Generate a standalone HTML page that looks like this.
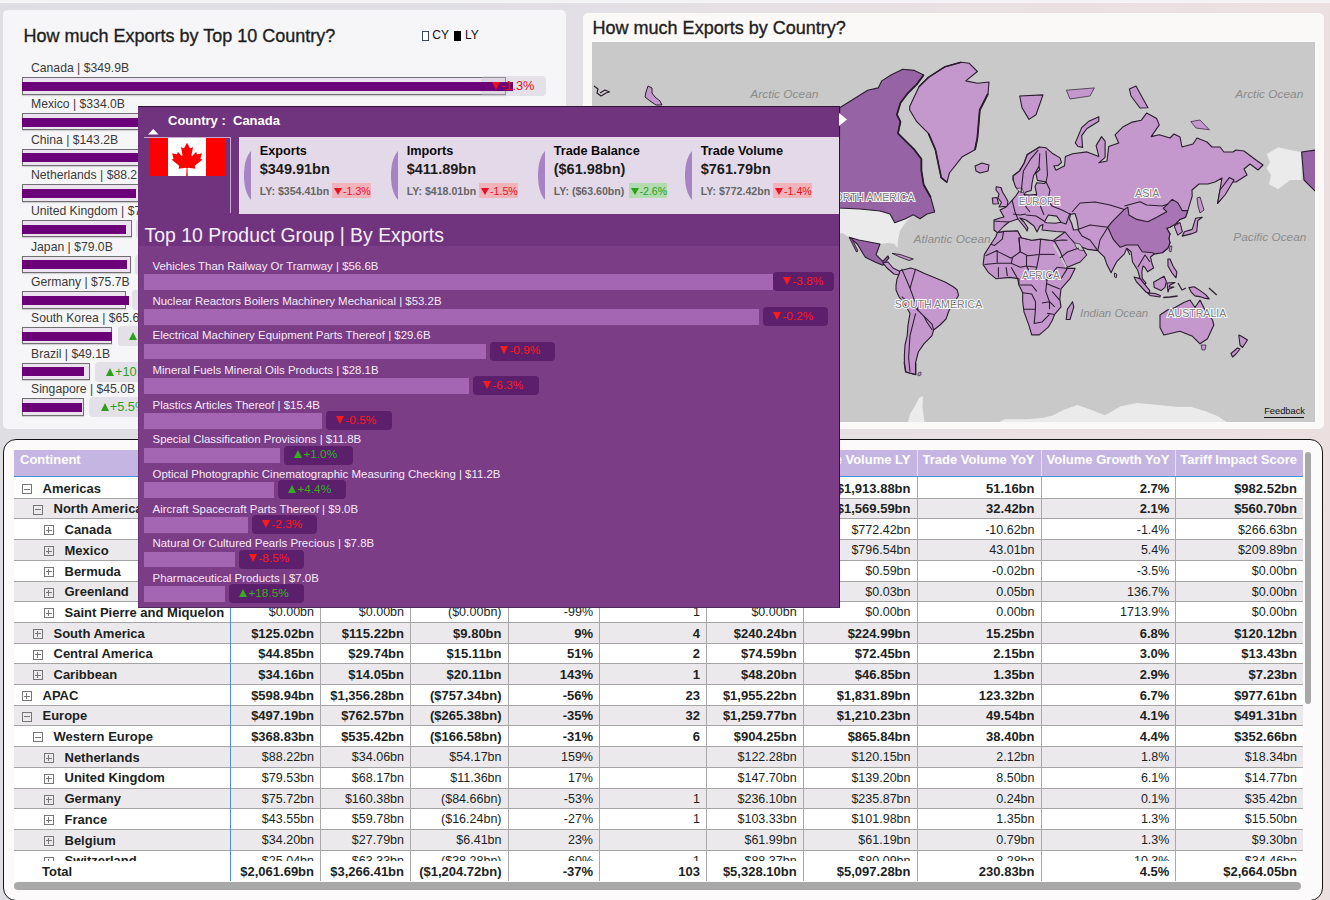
<!DOCTYPE html>
<html><head><meta charset="utf-8"><style>
html,body{margin:0;padding:0;width:1330px;height:900px;overflow:hidden;font-family:"Liberation Sans", sans-serif}
.t{position:absolute;white-space:nowrap;font-family:"Liberation Sans", sans-serif}
.r{position:absolute}
</style></head><body>
<div class="r" style="left:0;top:0;width:1330px;height:900px;background:linear-gradient(90deg,#dfdee3 0%,#e2e0e4 45%,#e9e0e2 75%,#ecdfe0 100%)"></div>
<div class="r" style="left:0.0px;top:0.0px;width:1330.0px;height:2.5px;background:#f4f3f5"></div>
<div class="r" style="left:3.0px;top:10.0px;width:563.0px;height:419.0px;background:#f6f6f8;border-radius:5px"></div>
<div class="t" style="left:23.5px;top:26.7px;font-size:18px;line-height:18px;color:#1f1e1d;-webkit-text-stroke:0.35px #1f1e1d">How much Exports by Top 10 Country?</div>
<div class="r" style="left:421.5px;top:30.5px;width:7.0px;height:10.0px;border:1px solid #3a4a5a;background:#fff;box-sizing:border-box"></div>
<div class="t" style="left:432.3px;top:28.8px;font-size:12px;line-height:12px;color:#111">CY</div>
<div class="r" style="left:453.5px;top:30.5px;width:7.5px;height:10.0px;background:#000"></div>
<div class="t" style="left:465.0px;top:28.8px;font-size:12px;line-height:12px;color:#111">LY</div>
<div class="t" style="left:31.0px;top:62.3px;font-size:12.2px;line-height:12.2px;color:#3b3a39">Canada | $349.9B</div>
<div class="r" style="left:22.0px;top:77.2px;width:483.5px;height:17.5px;background:#ede3f0;border:1px solid #707070;box-sizing:border-box;box-shadow:0 1px 1px rgba(0,0,0,.15)"></div>
<div class="r" style="left:480.5px;top:76.3px;width:65.3px;height:20.2px;background:rgba(200,194,210,.42);border-radius:4px"></div>
<div class="r" style="left:22.0px;top:82.0px;width:490.5px;height:9.0px;background:#6c0078"></div>
<div class="t" style="left:492.0px;top:80.3px;font-size:12.8px;line-height:12.8px;color:#e81123"><span style="display:inline-block;width:0;height:0;border-left:4.75px solid transparent;border-right:4.75px solid transparent;border-top:8.2px solid #e81123;vertical-align:0px;margin-right:1px"></span>-1.3%</div>
<div class="t" style="left:31.0px;top:98.0px;font-size:12.2px;line-height:12.2px;color:#3b3a39">Mexico | $334.0B</div>
<div class="r" style="left:22.0px;top:112.9px;width:458.0px;height:17.5px;background:#ede3f0;border:1px solid #707070;box-sizing:border-box;box-shadow:0 1px 1px rgba(0,0,0,.15)"></div>
<div class="r" style="left:470.0px;top:112.0px;width:70.0px;height:20.2px;background:rgba(200,194,210,.42);border-radius:4px"></div>
<div class="r" style="left:22.0px;top:117.7px;width:468.0px;height:9.0px;background:#6c0078"></div>
<div class="t" style="left:481.5px;top:116.0px;font-size:12.8px;line-height:12.8px;color:#e81123"><span style="display:inline-block;width:0;height:0;border-left:4.75px solid transparent;border-right:4.75px solid transparent;border-top:8.2px solid #e81123;vertical-align:0px;margin-right:1px"></span>-2.0%</div>
<div class="t" style="left:31.0px;top:133.7px;font-size:12.2px;line-height:12.2px;color:#3b3a39">China | $143.2B</div>
<div class="r" style="left:22.0px;top:148.5px;width:206.0px;height:17.5px;background:#ede3f0;border:1px solid #707070;box-sizing:border-box;box-shadow:0 1px 1px rgba(0,0,0,.15)"></div>
<div class="r" style="left:232.0px;top:147.6px;width:68.0px;height:20.2px;background:rgba(200,194,210,.42);border-radius:4px"></div>
<div class="r" style="left:22.0px;top:153.3px;width:200.0px;height:9.0px;background:#6c0078"></div>
<div class="t" style="left:243.5px;top:151.7px;font-size:12.8px;line-height:12.8px;color:#2ca01c"><span style="display:inline-block;width:0;height:0;border-left:4.75px solid transparent;border-right:4.75px solid transparent;border-bottom:8.2px solid #2ca01c;vertical-align:0px;margin-right:1px"></span>+2.0%</div>
<div class="t" style="left:31.0px;top:169.3px;font-size:12.2px;line-height:12.2px;color:#3b3a39">Netherlands | $88.2B</div>
<div class="r" style="left:22.0px;top:184.2px;width:128.0px;height:17.5px;background:#ede3f0;border:1px solid #707070;box-sizing:border-box;box-shadow:0 1px 1px rgba(0,0,0,.15)"></div>
<div class="r" style="left:155.0px;top:183.3px;width:65.0px;height:20.2px;background:rgba(200,194,210,.42);border-radius:4px"></div>
<div class="r" style="left:22.0px;top:189.0px;width:113.6px;height:9.0px;background:#6c0078"></div>
<div class="t" style="left:166.5px;top:187.3px;font-size:12.8px;line-height:12.8px;color:#2ca01c"><span style="display:inline-block;width:0;height:0;border-left:4.75px solid transparent;border-right:4.75px solid transparent;border-bottom:8.2px solid #2ca01c;vertical-align:0px;margin-right:1px"></span>+1.0%</div>
<div class="t" style="left:31.0px;top:205.0px;font-size:12.2px;line-height:12.2px;color:#3b3a39">United Kingdom | $79.5B</div>
<div class="r" style="left:22.0px;top:219.9px;width:109.6px;height:17.5px;background:#ede3f0;border:1px solid #707070;box-sizing:border-box;box-shadow:0 1px 1px rgba(0,0,0,.15)"></div>
<div class="r" style="left:136.0px;top:219.0px;width:69.0px;height:20.2px;background:rgba(200,194,210,.42);border-radius:4px"></div>
<div class="r" style="left:22.0px;top:224.7px;width:104.2px;height:9.0px;background:#6c0078"></div>
<div class="t" style="left:147.5px;top:223.0px;font-size:12.8px;line-height:12.8px;color:#2ca01c"><span style="display:inline-block;width:0;height:0;border-left:4.75px solid transparent;border-right:4.75px solid transparent;border-bottom:8.2px solid #2ca01c;vertical-align:0px;margin-right:1px"></span>+1.0%</div>
<div class="t" style="left:31.0px;top:240.7px;font-size:12.2px;line-height:12.2px;color:#3b3a39">Japan | $79.0B</div>
<div class="r" style="left:22.0px;top:255.6px;width:108.8px;height:17.5px;background:#ede3f0;border:1px solid #707070;box-sizing:border-box;box-shadow:0 1px 1px rgba(0,0,0,.15)"></div>
<div class="r" style="left:135.0px;top:254.7px;width:65.0px;height:20.2px;background:rgba(200,194,210,.42);border-radius:4px"></div>
<div class="r" style="left:22.0px;top:260.4px;width:105.0px;height:9.0px;background:#6c0078"></div>
<div class="t" style="left:146.5px;top:258.7px;font-size:12.8px;line-height:12.8px;color:#e81123"><span style="display:inline-block;width:0;height:0;border-left:4.75px solid transparent;border-right:4.75px solid transparent;border-top:8.2px solid #e81123;vertical-align:0px;margin-right:1px"></span>-1.0%</div>
<div class="t" style="left:31.0px;top:276.4px;font-size:12.2px;line-height:12.2px;color:#3b3a39">Germany | $75.7B</div>
<div class="r" style="left:22.0px;top:291.2px;width:103.5px;height:17.5px;background:#ede3f0;border:1px solid #707070;box-sizing:border-box;box-shadow:0 1px 1px rgba(0,0,0,.15)"></div>
<div class="r" style="left:132.0px;top:290.3px;width:68.0px;height:20.2px;background:rgba(200,194,210,.42);border-radius:4px"></div>
<div class="r" style="left:22.0px;top:296.0px;width:106.6px;height:9.0px;background:#6c0078"></div>
<div class="t" style="left:143.5px;top:294.3px;font-size:12.8px;line-height:12.8px;color:#2ca01c"><span style="display:inline-block;width:0;height:0;border-left:4.75px solid transparent;border-right:4.75px solid transparent;border-bottom:8.2px solid #2ca01c;vertical-align:0px;margin-right:1px"></span>+1.0%</div>
<div class="t" style="left:31.0px;top:312.0px;font-size:12.2px;line-height:12.2px;color:#3b3a39">South Korea | $65.6B</div>
<div class="r" style="left:22.0px;top:326.9px;width:89.6px;height:17.5px;background:#ede3f0;border:1px solid #707070;box-sizing:border-box;box-shadow:0 1px 1px rgba(0,0,0,.15)"></div>
<div class="r" style="left:117.7px;top:326.0px;width:67.3px;height:20.2px;background:rgba(200,194,210,.42);border-radius:4px"></div>
<div class="r" style="left:22.0px;top:331.7px;width:90.3px;height:9.0px;background:#6c0078"></div>
<div class="t" style="left:129.2px;top:330.0px;font-size:12.8px;line-height:12.8px;color:#2ca01c"><span style="display:inline-block;width:0;height:0;border-left:4.75px solid transparent;border-right:4.75px solid transparent;border-bottom:8.2px solid #2ca01c;vertical-align:0px;margin-right:1px"></span>+1.0%</div>
<div class="t" style="left:31.0px;top:347.7px;font-size:12.2px;line-height:12.2px;color:#3b3a39">Brazil | $49.1B</div>
<div class="r" style="left:22.0px;top:362.6px;width:67.5px;height:17.5px;background:#ede3f0;border:1px solid #707070;box-sizing:border-box;box-shadow:0 1px 1px rgba(0,0,0,.15)"></div>
<div class="r" style="left:94.5px;top:361.7px;width:75.5px;height:20.2px;background:rgba(200,194,210,.42);border-radius:4px"></div>
<div class="r" style="left:22.0px;top:367.4px;width:62.0px;height:9.0px;background:#6c0078"></div>
<div class="t" style="left:106.0px;top:365.7px;font-size:12.8px;line-height:12.8px;color:#2ca01c"><span style="display:inline-block;width:0;height:0;border-left:4.75px solid transparent;border-right:4.75px solid transparent;border-bottom:8.2px solid #2ca01c;vertical-align:0px;margin-right:1px"></span>+10.2%</div>
<div class="t" style="left:31.0px;top:383.4px;font-size:12.2px;line-height:12.2px;color:#3b3a39">Singapore | $45.0B</div>
<div class="r" style="left:22.0px;top:398.2px;width:61.7px;height:17.5px;background:#ede3f0;border:1px solid #707070;box-sizing:border-box;box-shadow:0 1px 1px rgba(0,0,0,.15)"></div>
<div class="r" style="left:89.2px;top:397.3px;width:68.8px;height:20.2px;background:rgba(200,194,210,.42);border-radius:4px"></div>
<div class="r" style="left:22.0px;top:403.0px;width:59.8px;height:9.0px;background:#6c0078"></div>
<div class="t" style="left:100.7px;top:401.4px;font-size:12.8px;line-height:12.8px;color:#2ca01c"><span style="display:inline-block;width:0;height:0;border-left:4.75px solid transparent;border-right:4.75px solid transparent;border-bottom:8.2px solid #2ca01c;vertical-align:0px;margin-right:1px"></span>+5.5%</div>
<div class="r" style="left:583.0px;top:13.0px;width:741.0px;height:416.0px;background:#fbf8f8;border-radius:5px"></div>
<div class="t" style="left:592.6px;top:18.6px;font-size:18px;line-height:18px;color:#1f1e1d;-webkit-text-stroke:0.35px #1f1e1d">How much Exports by Country?</div>
<div class="r" style="left:592.0px;top:42.0px;width:723.0px;height:379.0px;background:#c9c9c9;overflow:hidden"></div>
<svg class="r" style="left:592px;top:42px" width="723" height="380" viewBox="592 42 723 380">
<rect x="592" y="42" width="723" height="380" fill="#c9c9c9"/>
<path d="M908.0,422.0 L910.0,414.0 L915.0,406.0 L919.0,398.0 L923.0,396.0 L922.5,408.0 L924.5,422.0 Z" fill="#ebebeb" stroke="#2a1d2e" stroke-width="0" stroke-linejoin="round"/>
<path d="M999.0,422.0 L1004.5,419.3 L1026.0,419.3 L1042.4,418.0 L1053.0,415.2 L1064.0,409.8 L1077.6,405.0 L1091.0,409.8 L1104.7,415.2 L1110.0,412.5 L1121.0,406.3 L1137.0,403.0 L1158.8,405.0 L1177.8,407.0 L1191.3,407.0 L1205.0,411.0 L1218.4,416.5 L1226.5,422.0 Z" fill="#ebebeb" stroke="#2a1d2e" stroke-width="0" stroke-linejoin="round"/>
<path d="M839.0,208.0 L860.0,209.0 L880.0,211.0 L890.0,214.0 L894.7,222.7 L905.0,219.0 L913.3,214.7 L906.0,222.0 L900.0,230.7 L898.0,240.0 L897.3,248.0 L894.7,244.0 L888.0,243.0 L880.0,244.0 L873.3,242.7 L858.7,240.0 L849.3,237.3 L842.7,233.3 L839.0,233.3 Z" fill="#ebebeb" stroke="#2a1d2e" stroke-width="0" stroke-linejoin="round"/>
<path d="M594.0,86.0 L598.0,89.0 L597.0,93.0 L601.0,96.0 L606.0,93.0 L609.5,92.0 L605.0,90.0 L600.0,93.0" fill="none" stroke="#2a1d2e" stroke-width="1.2" stroke-linejoin="round"/>
<path d="M648.0,86.0 L652.0,88.0 L652.0,93.0 L655.0,97.0 L660.0,101.0 L662.0,105.0 L656.0,105.0 L650.0,101.0 L645.0,97.0 L646.0,92.0 Z" fill="#c497cd" stroke="#2a1d2e" stroke-width="1.0" stroke-linejoin="round"/>
<path d="M839.7,107.7 L867.7,90.2 L878.2,87.9 L881.7,80.9 L891.0,75.0 L902.7,69.2 L914.4,70.4 L923.7,75.0 L916.7,84.4 L907.4,93.7 L900.4,103.0 L896.9,114.7 L900.4,121.7 L898.0,133.4 L905.0,140.4 L914.4,149.7 L921.4,159.0 L921.4,170.7 L923.7,184.8 L930.7,197.3 L934.7,212.0 L927.0,214.0 L920.0,218.7 L913.3,214.7 L905.0,219.0 L894.7,222.7 L890.0,214.0 L880.0,211.0 L860.0,209.0 L839.0,208.0 Z" fill="#9663a5" stroke="#2a1d2e" stroke-width="1.1" stroke-linejoin="round"/>
<path d="M1266.6,154.3 L1278.3,147.3 L1290.0,150.0 L1301.6,152.0 L1301.6,180.0 L1290.0,180.0 L1278.3,189.3 L1269.0,184.6 L1271.0,175.0 L1266.6,168.3 L1270.0,162.0 Z" fill="#ebebeb" stroke="#2a1d2e" stroke-width="0" stroke-linejoin="round"/>
<path d="M1301.6,152.0 L1316.0,150.0 L1316.0,192.0 L1304.0,180.0 Z" fill="#9663a5" stroke="#2a1d2e" stroke-width="1.1" stroke-linejoin="round"/>
<path d="M909.7,106.5 L919.0,86.7 L928.4,77.4 L944.7,66.9 L961.0,62.2 L969.3,63.3 L977.4,71.5 L965.8,80.9 L977.4,83.2 L989.0,82.0 L988.0,93.7 L979.8,110.0 L977.4,138.0 L975.0,149.7 L962.3,156.7 L949.4,173.0 L947.0,182.4 L941.2,177.7 L935.4,149.7 L928.4,133.4 L916.7,121.7 L909.7,110.0 Z" fill="#c497cd" stroke="#2a1d2e" stroke-width="1.1" stroke-linejoin="round"/>
<path d="M923.7,75.0 L916.7,84.4 L907.4,93.7 L900.4,103.0 L896.9,114.7 L900.4,121.7 L898.0,133.4 L905.0,140.4 L914.4,149.7 L921.4,159.0 L921.4,170.7 L923.7,184.8 L930.7,197.3" fill="none" stroke="#2a1d2e" stroke-width="1.8" stroke-linejoin="round"/>
<path d="M988.0,93.7 L979.8,110.0 L977.4,138.0 L975.0,149.7" fill="none" stroke="#2a1d2e" stroke-width="1.9" stroke-linejoin="round"/>
<path d="M928.4,133.4 L935.4,149.7 L941.2,177.7 L947.0,182.4" fill="none" stroke="#2a1d2e" stroke-width="1.7" stroke-linejoin="round"/>
<path d="M919.0,86.7 L928.4,77.4 L944.7,66.9 L961.0,62.2" fill="none" stroke="#2a1d2e" stroke-width="1.5" stroke-linejoin="round"/>
<path d="M1013.3,180.4 L1013.3,175.8 L1019.5,171.1 L1024.2,163.3 L1027.3,154.8 L1033.5,150.9 L1039.8,147.0" fill="none" stroke="#2a1d2e" stroke-width="1.6" stroke-linejoin="round"/>
<path d="M915.5,363.0 L915.5,374.4 L910.0,373.0 L905.8,371.7 L904.4,362.0" fill="none" stroke="#2a1d2e" stroke-width="1.8" stroke-linejoin="round"/>
<path d="M975.0,166.0 L982.0,163.0 L989.0,165.0 L988.0,171.0 L980.0,173.0 L976.0,171.0 Z" fill="#c497cd" stroke="#2a1d2e" stroke-width="1.1" stroke-linejoin="round"/>
<path d="M849.3,237.3 L858.7,240.0 L873.3,242.7 L880.0,244.0 L876.0,254.7 L882.7,261.3 L888.0,256.0 L889.0,258.0 L882.7,265.3 L875.0,262.0 L865.3,257.3 L857.3,244.0 Z" fill="#9663a5" stroke="#2a1d2e" stroke-width="1.1" stroke-linejoin="round"/>
<path d="M849.5,238.0 L852.0,239.0 L858.0,251.0 L856.5,252.0 Z" fill="#9663a5" stroke="#2a1d2e" stroke-width="0.9" stroke-linejoin="round"/>
<path d="M882.7,262.7 L888.0,262.0 L893.0,268.0 L900.0,271.5 L899.0,275.0 L894.0,274.0 L887.0,268.0 Z" fill="#c497cd" stroke="#2a1d2e" stroke-width="1.1" stroke-linejoin="round"/>
<path d="M892.0,253.3 L900.0,254.5 L913.3,259.0 L909.0,260.5 L900.0,257.0 Z" fill="#c497cd" stroke="#2a1d2e" stroke-width="0.9" stroke-linejoin="round"/>
<path d="M899.0,274.4 L900.0,270.7 L910.7,268.0 L917.0,270.0 L924.0,273.3 L937.3,278.7 L945.0,282.0 L953.3,286.7 L957.0,289.7 L958.6,295.3 L954.0,303.0 L949.0,310.5 L946.0,319.0 L940.0,325.0 L933.6,330.0 L932.0,335.6 L923.9,343.9 L918.3,352.0 L915.5,363.0 L915.5,374.4 L910.0,373.0 L905.8,371.7 L904.4,362.0 L904.4,355.0 L905.0,345.0 L907.2,335.6 L908.0,325.0 L910.0,313.3 L905.0,305.0 L899.0,296.7 L896.0,290.0 L896.0,285.6 L897.0,279.0 Z" fill="#c497cd" stroke="#2a1d2e" stroke-width="1.1" stroke-linejoin="round"/>
<path d="M918.0,373.0 L921.0,372.0 L921.0,375.0 L918.0,376.0 Z" fill="#c497cd" stroke="#2a1d2e" stroke-width="0.6" stroke-linejoin="round"/>
<path d="M1015.7,187.4 L1013.3,180.4 L1013.3,175.8 L1019.5,171.1 L1024.2,163.3 L1027.3,154.8 L1033.5,150.9 L1039.8,147.0 L1046.0,147.8 L1052.2,153.2 L1060.0,157.9 L1061.5,162.6 L1057.7,165.7 L1053.8,165.7 L1056.0,170.3 L1064.6,165.7 L1065.4,156.4 L1072.6,153.7 L1087.0,151.9 L1098.8,156.4 L1096.1,145.6 L1101.5,136.6 L1105.1,141.1 L1105.1,157.3 L1098.8,162.8 L1107.0,161.0 L1108.7,146.5 L1118.7,142.9 L1115.0,134.8 L1123.2,126.7 L1132.2,122.1 L1141.2,120.3 L1146.6,113.1 L1150.3,114.9 L1156.6,118.5 L1159.3,124.9 L1151.2,136.6 L1159.3,134.8 L1170.0,138.0 L1174.0,134.0 L1180.0,137.0 L1182.0,147.0 L1193.0,144.0 L1197.0,138.0 L1207.0,142.0 L1212.0,147.0 L1220.0,147.0 L1224.0,152.0 L1233.0,152.0 L1236.0,150.0 L1244.0,151.0 L1256.0,160.0 L1263.0,165.0 L1258.0,170.0 L1250.0,164.0 L1244.0,169.0 L1247.0,175.0 L1236.0,182.0 L1227.0,182.0 L1224.0,195.0 L1217.6,203.3 L1222.0,178.0 L1215.0,182.0 L1208.0,184.0 L1199.0,184.0 L1192.0,190.0 L1192.2,196.1 L1187.8,210.6 L1185.6,217.2 L1180.0,219.4 L1175.6,223.9 L1174.4,226.1 L1177.8,235.0 L1182.2,231.7 L1180.0,222.8 L1175.6,223.9 L1170.0,227.2 L1166.7,228.3 L1170.0,233.9 L1168.9,238.3 L1170.0,242.8 L1167.8,248.3 L1162.2,252.8 L1158.8,250.5 L1153.6,254.5 L1150.5,257.0 L1152.0,263.5 L1153.6,268.0 L1147.6,271.8 L1145.0,267.5 L1143.0,266.0 L1141.8,272.0 L1142.3,278.6 L1146.0,283.0 L1144.5,284.6 L1140.0,278.6 L1137.8,270.3 L1132.5,262.0 L1131.1,251.7 L1126.7,248.3 L1124.4,253.9 L1116.7,261.7 L1114.4,266.1 L1111.1,272.8 L1106.7,263.9 L1104.4,257.2 L1100.0,252.8 L1097.8,250.6 L1087.8,249.4 L1082.0,247.0 L1086.7,255.0 L1080.2,262.0 L1067.4,267.2 L1059.8,258.2 L1053.4,244.2 L1052.0,241.6 L1040.0,241.0 L1020.0,236.0 L998.0,233.0 L994.0,230.0 L994.0,220.0 L1000.0,218.0 L1004.0,217.0 L1000.0,210.0 L1006.0,207.0 L1011.8,200.7 L1015.7,196.0 L1019.5,190.5 L1018.0,189.0 Z" fill="#c497cd" stroke="#2a1d2e" stroke-width="1.1" stroke-linejoin="round"/>
<path d="M997.2,232.7 L1003.6,231.4 L1017.6,230.7 L1021.4,237.8 L1031.7,240.3 L1040.6,239.1 L1050.8,240.3 L1054.7,241.6 L1059.8,250.6 L1064.9,263.3 L1067.4,268.4 L1075.1,268.4 L1070.0,278.7 L1061.0,288.9 L1059.8,299.1 L1061.0,306.8 L1054.7,314.4 L1052.1,320.8 L1048.3,327.2 L1039.3,334.9 L1031.7,334.9 L1029.1,325.9 L1024.0,311.9 L1022.7,301.7 L1022.7,292.7 L1018.9,285.0 L1018.9,278.7 L1009.9,277.4 L995.9,278.7 L988.2,272.3 L983.1,264.6 L984.4,254.4 L990.8,244.2 L995.9,236.5 Z" fill="#c497cd" stroke="#2a1d2e" stroke-width="1.1" stroke-linejoin="round"/>
<path d="M1067.4,309.3 L1072.5,301.7 L1073.8,306.8 L1070.0,319.5 L1066.2,319.5 Z" fill="#c497cd" stroke="#2a1d2e" stroke-width="1.1" stroke-linejoin="round"/>
<path d="M998.0,232.5 L1004.0,226.0 L1009.0,222.0 L1018.0,219.0 L1022.0,224.0 L1026.0,229.0 L1027.0,231.0 L1028.0,228.0 L1024.0,222.0 L1020.0,218.0 L1026.0,220.0 L1034.0,226.0 L1037.0,232.0 L1040.0,226.0 L1043.0,224.5 L1042.0,230.0 L1056.0,231.5 L1065.0,232.0 L1054.0,240.0 L1052.0,240.5 L1040.6,239.1 L1031.7,240.3 L1021.4,237.8 L1017.6,230.7 L1003.6,231.4 Z" fill="#c9c9c9" stroke="#2a1d2e" stroke-width="1.1" stroke-linejoin="round"/>
<path d="M1044.4,221.7 L1048.3,215.0 L1056.7,216.1 L1061.1,222.2 L1055.0,223.3 L1046.7,222.8 Z" fill="#c9c9c9" stroke="#2a1d2e" stroke-width="1.1" stroke-linejoin="round"/>
<path d="M1070.5,214.4 L1075.0,213.5 L1077.0,220.0 L1078.5,229.5 L1073.5,230.0 L1071.5,223.0 L1069.5,219.0 Z" fill="#c9c9c9" stroke="#2a1d2e" stroke-width="1.1" stroke-linejoin="round"/>
<path d="M1114.4,273.0 L1116.7,274.0 L1116.5,277.5 L1114.5,277.0 Z" fill="#c497cd" stroke="#2a1d2e" stroke-width="0.9" stroke-linejoin="round"/>
<path d="M1039.0,166.4 L1039.8,169.5 L1035.9,173.4 L1037.4,180.4 L1046.0,182.0 L1044.4,183.5 L1036.7,182.8 L1035.0,186.7 L1036.7,194.4 L1030.0,195.0 L1024.0,194.5 L1026.0,192.0 L1031.2,190.5 L1032.0,183.5 L1033.5,175.8 Z" fill="#c9c9c9" stroke="#2a1d2e" stroke-width="1.1" stroke-linejoin="round"/>
<path d="M1016.0,188.5 L1022.0,188.0 L1024.0,193.0 L1019.5,191.5 Z" fill="#c9c9c9" stroke="#2a1d2e" stroke-width="0.6" stroke-linejoin="round"/>
<path d="M1053.4,244.2 L1058.0,252.0 L1062.0,259.0 L1066.2,267.2" fill="none" stroke="#c9c9c9" stroke-width="1.8" stroke-linejoin="round"/>
<path d="M1074.4,242.8 L1080.0,244.0 L1084.0,250.6 L1079.0,250.0 L1076.0,247.0 Z" fill="#c9c9c9" stroke="#2a1d2e" stroke-width="0.7" stroke-linejoin="round"/>
<path d="M996.2,186.7 L1001.0,187.5 L1002.5,192.0 L1005.0,196.0 L1008.0,201.5 L1007.0,206.2 L999.0,207.0 L1001.5,202.5 L998.0,198.0 L999.0,194.0 L996.0,190.0 Z" fill="#c497cd" stroke="#2a1d2e" stroke-width="1.1" stroke-linejoin="round"/>
<path d="M992.3,198.0 L997.0,197.5 L998.6,203.8 L993.0,204.0 Z" fill="#c497cd" stroke="#2a1d2e" stroke-width="1.1" stroke-linejoin="round"/>
<path d="M1019.7,96.0 L1043.0,94.9 L1036.0,114.7 L1029.0,119.4 L1022.0,107.7 Z" fill="#c497cd" stroke="#2a1d2e" stroke-width="1.1" stroke-linejoin="round"/>
<path d="M1066.4,90.2 L1094.4,87.9 L1090.0,96.0 L1070.0,99.0 Z" fill="#c497cd" stroke="#2a1d2e" stroke-width="0.7" stroke-linejoin="round"/>
<path d="M1075.3,142.9 L1081.7,127.6 L1088.9,121.2 L1098.8,116.7 L1098.8,121.2 L1087.0,128.5 L1081.7,135.7 L1082.6,147.4 L1078.0,146.5 Z" fill="#c497cd" stroke="#2a1d2e" stroke-width="1.1" stroke-linejoin="round"/>
<path d="M1129.4,89.0 L1136.0,86.0 L1142.0,97.0 L1148.0,107.7 L1140.0,108.0 L1131.0,96.0 Z" fill="#c497cd" stroke="#2a1d2e" stroke-width="1.1" stroke-linejoin="round"/>
<path d="M1190.8,121.6 L1200.0,120.0 L1209.4,129.8 L1196.0,128.0 Z" fill="#c497cd" stroke="#2a1d2e" stroke-width="0.7" stroke-linejoin="round"/>
<path d="M1229.3,177.6 L1234.0,180.0 L1225.0,195.0 L1217.6,203.3 L1220.0,190.0 Z" fill="#c497cd" stroke="#2a1d2e" stroke-width="1.1" stroke-linejoin="round"/>
<path d="M1202.2,217.2 L1197.8,220.6 L1196.7,231.7 L1191.1,233.9 L1182.2,236.1 L1184.4,231.7 L1192.2,229.4 L1195.6,218.3 Z" fill="#c497cd" stroke="#2a1d2e" stroke-width="1.1" stroke-linejoin="round"/>
<path d="M1197.0,198.0 L1200.0,197.0 L1204.0,210.0 L1200.0,213.0 L1198.0,206.0 Z" fill="#c497cd" stroke="#2a1d2e" stroke-width="0.8" stroke-linejoin="round"/>
<path d="M1170.0,246.0 L1172.0,246.0 L1171.0,252.0 L1169.0,251.0 Z" fill="#c497cd" stroke="#2a1d2e" stroke-width="0.7" stroke-linejoin="round"/>
<path d="M1134.0,277.0 L1140.0,278.6 L1149.8,290.6 L1149.0,293.6 L1146.0,292.0 L1136.3,281.6 Z" fill="#c497cd" stroke="#2a1d2e" stroke-width="1.1" stroke-linejoin="round"/>
<path d="M1147.6,292.9 L1155.0,293.5 L1160.3,295.5 L1160.0,297.0 L1150.0,295.5 Z" fill="#c497cd" stroke="#2a1d2e" stroke-width="1.1" stroke-linejoin="round"/>
<path d="M1163.3,297.5 L1170.0,297.0 L1177.6,296.0" fill="none" stroke="#2a1d2e" stroke-width="1.5" stroke-linejoin="round"/>
<path d="M1153.6,282.3 L1158.8,279.3 L1164.0,276.3 L1166.4,281.6 L1164.8,287.6 L1161.0,290.6 L1154.3,287.6 Z" fill="#c497cd" stroke="#2a1d2e" stroke-width="1.1" stroke-linejoin="round"/>
<path d="M1167.0,283.0 L1175.0,282.5 L1170.0,285.0 L1169.0,287.0 L1174.0,287.0 L1169.0,289.0 L1168.0,292.0 Z" fill="#c497cd" stroke="#2a1d2e" stroke-width="1.1" stroke-linejoin="round"/>
<path d="M1167.9,259.0 L1170.0,259.0 L1173.0,266.0 L1176.9,272.0 L1176.0,277.8 L1172.0,273.0 L1168.0,266.0 Z" fill="#c497cd" stroke="#2a1d2e" stroke-width="1.1" stroke-linejoin="round"/>
<path d="M1188.9,287.6 L1194.2,286.8 L1200.2,290.6 L1206.2,295.1 L1209.2,298.9 L1204.0,298.1 L1199.4,296.6 L1194.9,295.9 L1191.2,292.1 Z" fill="#c497cd" stroke="#2a1d2e" stroke-width="1.1" stroke-linejoin="round"/>
<path d="M1209.0,288.0 L1216.7,295.0" fill="none" stroke="#2a1d2e" stroke-width="1.2" stroke-linejoin="round"/>
<path d="M1178.0,283.0 L1182.0,290.0 L1186.0,288.0" fill="none" stroke="#2a1d2e" stroke-width="1.2" stroke-linejoin="round"/>
<path d="M1160.0,315.0 L1167.5,310.0 L1175.0,307.5 L1183.8,302.5 L1190.0,300.0 L1195.0,307.5 L1200.0,300.0 L1205.0,310.0 L1212.5,320.0 L1213.8,325.0 L1207.5,338.8 L1200.0,343.8 L1192.5,336.3 L1180.0,331.3 L1163.8,335.0 L1160.0,327.5 Z" fill="#c497cd" stroke="#2a1d2e" stroke-width="1.1" stroke-linejoin="round"/>
<path d="M1201.0,345.0 L1206.0,345.0 L1205.0,350.0 L1202.0,350.0 Z" fill="#c497cd" stroke="#2a1d2e" stroke-width="0.7" stroke-linejoin="round"/>
<path d="M1238.8,335.0 L1241.0,336.0 L1247.5,340.0 L1242.5,347.5 L1240.0,345.0 Z" fill="#c497cd" stroke="#2a1d2e" stroke-width="1.1" stroke-linejoin="round"/>
<path d="M1240.0,349.0 L1236.0,354.0 L1232.5,357.0 L1231.0,353.5 L1237.5,348.0 Z" fill="#c497cd" stroke="#2a1d2e" stroke-width="1.1" stroke-linejoin="round"/>
<path d="M1107.8,227.2 L1112.2,221.7 L1124.4,209.4 L1127.8,207.2 L1128.9,215.0 L1136.7,219.4 L1147.8,221.7 L1156.7,217.2 L1166.7,211.7 L1163.3,208.3 L1167.8,203.9 L1172.2,199.4 L1177.8,202.8 L1182.2,210.6 L1187.8,210.6 L1185.6,217.2 L1180.0,219.4 L1175.6,223.9 L1170.0,227.2 L1166.7,228.3 L1170.0,233.9 L1168.9,238.3 L1170.0,242.8 L1167.8,248.3 L1162.2,252.8 L1155.6,253.9 L1152.2,252.8 L1142.2,251.7 L1137.8,245.0 L1126.7,245.0 L1120.0,247.2 L1113.3,239.4 Z" fill="#a874b3" stroke="#2a1d2e" stroke-width="1.1" stroke-linejoin="round"/>
<path d="M1174.4,226.1 L1180.0,222.8 L1182.2,231.7 L1177.8,235.0 L1175.6,229.4 Z" fill="#c497cd" stroke="#2a1d2e" stroke-width="0.8" stroke-linejoin="round"/>
<path d="M1003.6,231.4 L1002.3,239.1 L994.6,245.4 L990.8,244.2" fill="none" stroke="#2a1d2e" stroke-width="1.05" stroke-linejoin="round"/>
<path d="M995.9,250.6 L1011.2,258.2 L1020.2,251.8 L1018.9,237.8 L1021.4,237.8" fill="none" stroke="#2a1d2e" stroke-width="1.05" stroke-linejoin="round"/>
<path d="M1018.9,237.8 L1020.2,251.8 L1027.8,255.7 L1039.3,254.4 L1040.6,239.1" fill="none" stroke="#2a1d2e" stroke-width="1.05" stroke-linejoin="round"/>
<path d="M1039.3,254.4 L1054.7,254.4" fill="none" stroke="#2a1d2e" stroke-width="1.05" stroke-linejoin="round"/>
<path d="M1026.5,255.7 L1026.5,265.9 L1036.8,267.2 L1039.3,254.4" fill="none" stroke="#2a1d2e" stroke-width="1.05" stroke-linejoin="round"/>
<path d="M1036.8,267.2 L1034.2,276.1 L1047.0,279.9 L1057.2,267.2" fill="none" stroke="#2a1d2e" stroke-width="1.05" stroke-linejoin="round"/>
<path d="M985.7,255.7 L997.2,250.6 L997.2,263.3 L984.4,264.6" fill="none" stroke="#2a1d2e" stroke-width="1.05" stroke-linejoin="round"/>
<path d="M997.2,263.3 L1011.2,263.3 L1012.5,258.2" fill="none" stroke="#2a1d2e" stroke-width="1.05" stroke-linejoin="round"/>
<path d="M1011.2,263.3 L1020.2,267.2 L1026.5,265.9" fill="none" stroke="#2a1d2e" stroke-width="1.05" stroke-linejoin="round"/>
<path d="M998.4,267.2 L998.4,277.4" fill="none" stroke="#2a1d2e" stroke-width="1.05" stroke-linejoin="round"/>
<path d="M1006.1,267.2 L1007.4,276.1" fill="none" stroke="#2a1d2e" stroke-width="1.05" stroke-linejoin="round"/>
<path d="M1011.2,267.2 L1017.6,278.7 L1018.9,285.0" fill="none" stroke="#2a1d2e" stroke-width="1.05" stroke-linejoin="round"/>
<path d="M1026.5,265.9 L1031.7,276.1 L1021.4,278.7" fill="none" stroke="#2a1d2e" stroke-width="1.05" stroke-linejoin="round"/>
<path d="M1047.0,279.9 L1045.7,291.4 L1049.5,301.7 L1049.5,309.3" fill="none" stroke="#2a1d2e" stroke-width="1.05" stroke-linejoin="round"/>
<path d="M1022.7,292.7 L1031.7,294.0 L1035.5,301.7 L1035.5,309.3 L1024.0,309.3" fill="none" stroke="#2a1d2e" stroke-width="1.05" stroke-linejoin="round"/>
<path d="M1035.5,309.3 L1034.2,323.4 L1041.9,322.1 L1049.5,314.4" fill="none" stroke="#2a1d2e" stroke-width="1.05" stroke-linejoin="round"/>
<path d="M1047.0,283.8 L1059.8,288.9" fill="none" stroke="#2a1d2e" stroke-width="1.05" stroke-linejoin="round"/>
<path d="M1052.1,291.4 L1059.8,300.4" fill="none" stroke="#2a1d2e" stroke-width="1.05" stroke-linejoin="round"/>
<path d="M1041.9,302.9 L1049.5,301.7 L1054.7,306.8" fill="none" stroke="#2a1d2e" stroke-width="1.05" stroke-linejoin="round"/>
<path d="M1057.2,267.2 L1067.4,268.4 L1061.0,278.7" fill="none" stroke="#2a1d2e" stroke-width="1.05" stroke-linejoin="round"/>
<path d="M1020.2,285.0 L1031.7,285.0 L1036.8,291.4" fill="none" stroke="#2a1d2e" stroke-width="1.05" stroke-linejoin="round"/>
<path d="M1054.7,314.4 L1047.0,313.2" fill="none" stroke="#2a1d2e" stroke-width="1.05" stroke-linejoin="round"/>
<path d="M1021.0,193.0 L1023.4,171.1 L1030.4,159.4 L1038.2,150.1" fill="none" stroke="#2a1d2e" stroke-width="1.05" stroke-linejoin="round"/>
<path d="M1039.0,166.4 L1039.8,153.2" fill="none" stroke="#2a1d2e" stroke-width="1.05" stroke-linejoin="round"/>
<path d="M1046.0,150.9 L1047.5,175.0 L1046.0,182.0" fill="none" stroke="#2a1d2e" stroke-width="1.05" stroke-linejoin="round"/>
<path d="M1046.0,182.0 L1050.0,190.0 L1048.0,200.0 L1052.0,206.0 L1062.0,210.0 L1070.5,214.4" fill="none" stroke="#2a1d2e" stroke-width="1.05" stroke-linejoin="round"/>
<path d="M1072.0,212.0 L1080.0,203.0 L1095.0,202.0 L1110.0,205.0 L1124.4,209.4" fill="none" stroke="#2a1d2e" stroke-width="1.05" stroke-linejoin="round"/>
<path d="M1124.4,206.1 L1140.0,201.7 L1146.7,205.0 L1162.2,206.1 L1167.8,203.9" fill="none" stroke="#2a1d2e" stroke-width="1.05" stroke-linejoin="round"/>
<path d="M1077.8,229.4 L1090.0,225.0 L1107.8,227.2" fill="none" stroke="#2a1d2e" stroke-width="1.05" stroke-linejoin="round"/>
<path d="M1065.0,232.0 L1070.0,238.0 L1074.4,242.8" fill="none" stroke="#2a1d2e" stroke-width="1.05" stroke-linejoin="round"/>
<path d="M1077.8,229.4 L1082.0,236.0 L1090.0,240.0 L1097.8,250.6" fill="none" stroke="#2a1d2e" stroke-width="1.05" stroke-linejoin="round"/>
<path d="M1097.8,250.6 L1100.0,240.0 L1107.8,227.2" fill="none" stroke="#2a1d2e" stroke-width="1.05" stroke-linejoin="round"/>
<path d="M1059.8,258.2 L1067.4,252.0 L1078.9,248.0" fill="none" stroke="#2a1d2e" stroke-width="1.05" stroke-linejoin="round"/>
<path d="M1137.8,267.2 L1145.0,255.0 L1150.0,262.0" fill="none" stroke="#2a1d2e" stroke-width="1.05" stroke-linejoin="round"/>
<path d="M1126.7,248.3 L1130.0,255.0" fill="none" stroke="#2a1d2e" stroke-width="1.05" stroke-linejoin="round"/>
<path d="M994.0,221.0 L1000.0,221.5 L1009.0,222.0" fill="none" stroke="#2a1d2e" stroke-width="1.05" stroke-linejoin="round"/>
<path d="M1012.0,200.0 L1015.0,212.0 L1018.0,219.0" fill="none" stroke="#2a1d2e" stroke-width="1.05" stroke-linejoin="round"/>
<path d="M1025.0,195.0 L1026.0,207.0 L1030.0,212.0" fill="none" stroke="#2a1d2e" stroke-width="1.05" stroke-linejoin="round"/>
<path d="M1013.0,214.0 L1020.0,215.0 L1026.0,214.0" fill="none" stroke="#2a1d2e" stroke-width="1.05" stroke-linejoin="round"/>
<path d="M1036.0,195.0 L1040.0,205.0 L1044.0,215.0" fill="none" stroke="#2a1d2e" stroke-width="1.05" stroke-linejoin="round"/>
<path d="M1026.0,215.0 L1036.0,216.0 L1044.0,221.0" fill="none" stroke="#2a1d2e" stroke-width="1.05" stroke-linejoin="round"/>
<path d="M1060.0,222.0 L1066.0,224.0 L1070.0,213.0" fill="none" stroke="#2a1d2e" stroke-width="1.05" stroke-linejoin="round"/>
<path d="M1054.0,241.0 L1062.0,240.0 L1067.4,240.3" fill="none" stroke="#2a1d2e" stroke-width="1.05" stroke-linejoin="round"/>
<path d="M901.7,268.9 L910.0,288.3 L918.3,310.6 L932.2,324.4 L933.6,330.0" fill="none" stroke="#2a1d2e" stroke-width="1.05" stroke-linejoin="round"/>
<path d="M915.6,268.9 L910.0,288.3" fill="none" stroke="#2a1d2e" stroke-width="1.05" stroke-linejoin="round"/>
<path d="M901.7,296.7 L918.3,310.6" fill="none" stroke="#2a1d2e" stroke-width="1.05" stroke-linejoin="round"/>
<path d="M915.6,313.3 L910.0,335.6 L908.6,357.8 L910.0,371.7" fill="none" stroke="#2a1d2e" stroke-width="1.05" stroke-linejoin="round"/>
<path d="M923.9,316.1 L926.7,321.7 L932.2,330.0" fill="none" stroke="#2a1d2e" stroke-width="1.05" stroke-linejoin="round"/>
<text x="827" y="201" font-family="Liberation Sans" font-size="11" fill="#7c7c7c" stroke="#fbfbfb" stroke-width="2" paint-order="stroke" textLength="87.39999999999998" lengthAdjust="spacingAndGlyphs">NORTH AMERICA</text>
<text x="894.7" y="307.8" font-family="Liberation Sans" font-size="11" fill="#7c7c7c" stroke="#fbfbfb" stroke-width="2" paint-order="stroke" textLength="87.5" lengthAdjust="spacingAndGlyphs">SOUTH AMERICA</text>
<text x="1018.8" y="204.5" font-family="Liberation Sans" font-size="11" fill="#7c7c7c" stroke="#fbfbfb" stroke-width="2" paint-order="stroke" textLength="41.200000000000045" lengthAdjust="spacingAndGlyphs">EUROPE</text>
<text x="1135" y="196.7" font-family="Liberation Sans" font-size="11" fill="#7c7c7c" stroke="#fbfbfb" stroke-width="2" paint-order="stroke" textLength="24.40000000000009" lengthAdjust="spacingAndGlyphs">ASIA</text>
<text x="1022" y="278.7" font-family="Liberation Sans" font-size="11" fill="#7c7c7c" stroke="#fbfbfb" stroke-width="2" paint-order="stroke" textLength="37.799999999999955" lengthAdjust="spacingAndGlyphs">AFRICA</text>
<text x="1167.5" y="317" font-family="Liberation Sans" font-size="11" fill="#7c7c7c" stroke="#fbfbfb" stroke-width="2" paint-order="stroke" textLength="58.799999999999955" lengthAdjust="spacingAndGlyphs">AUSTRALIA</text>
<text x="750.3" y="98.3" font-family="Liberation Sans" font-size="11" font-style="italic" fill="#8c8c8c" textLength="68.10000000000002" lengthAdjust="spacingAndGlyphs">Arctic Ocean</text>
<text x="1235.3" y="97.8" font-family="Liberation Sans" font-size="11" font-style="italic" fill="#8c8c8c" textLength="68.0" lengthAdjust="spacingAndGlyphs">Arctic Ocean</text>
<text x="913.6" y="243.3" font-family="Liberation Sans" font-size="11" font-style="italic" fill="#8c8c8c" textLength="77.0" lengthAdjust="spacingAndGlyphs">Atlantic Ocean</text>
<text x="1233.3" y="241.3" font-family="Liberation Sans" font-size="11" font-style="italic" fill="#8c8c8c" textLength="73.0" lengthAdjust="spacingAndGlyphs">Pacific Ocean</text>
<text x="1080" y="316.7" font-family="Liberation Sans" font-size="11" font-style="italic" fill="#8c8c8c" textLength="68.20000000000005" lengthAdjust="spacingAndGlyphs">Indian Ocean</text>
<text x="1264.2" y="413.7" font-family="Liberation Sans" font-size="9.6" fill="#111" textLength="40.8" lengthAdjust="spacingAndGlyphs">Feedback</text>
<rect x="1264" y="417" width="40" height="1" fill="#111"/>
</svg>
<div class="r" style="left:3.0px;top:439.0px;width:1320.0px;height:462.0px;background:#fcfafa;border:1.6px solid #151515;border-radius:13px;box-sizing:border-box"></div>
<div class="r" style="left:14.0px;top:450.0px;width:1289.0px;height:27.0px;background:#c5b5e3"></div>
<div class="r" style="left:14.0px;top:475.5px;width:1289.0px;height:1.7px;background:#4a90d9"></div>
<div class="r" style="left:230.0px;top:450.0px;width:1.0px;height:25.5px;background:#e6def2"></div>
<div class="r" style="left:320.0px;top:450.0px;width:1.0px;height:25.5px;background:#e6def2"></div>
<div class="r" style="left:410.0px;top:450.0px;width:1.0px;height:25.5px;background:#e6def2"></div>
<div class="r" style="left:507.5px;top:450.0px;width:1.0px;height:25.5px;background:#e6def2"></div>
<div class="r" style="left:599.0px;top:450.0px;width:1.0px;height:25.5px;background:#e6def2"></div>
<div class="r" style="left:706.0px;top:450.0px;width:1.0px;height:25.5px;background:#e6def2"></div>
<div class="r" style="left:802.6px;top:450.0px;width:1.0px;height:25.5px;background:#e6def2"></div>
<div class="r" style="left:916.5px;top:450.0px;width:1.0px;height:25.5px;background:#e6def2"></div>
<div class="r" style="left:1040.5px;top:450.0px;width:1.0px;height:25.5px;background:#e6def2"></div>
<div class="r" style="left:1175.4px;top:450.0px;width:1.0px;height:25.5px;background:#e6def2"></div>
<div class="t" style="left:20.0px;top:453.4px;font-size:13px;line-height:13px;color:#fff;font-weight:bold">Continent</div>
<div class="t" style="right:1016.0px;top:453.4px;font-size:13px;line-height:13px;color:#fff;font-weight:bold">Exports</div>
<div class="t" style="right:926.0px;top:453.4px;font-size:13px;line-height:13px;color:#fff;font-weight:bold">Imports</div>
<div class="t" style="right:828.5px;top:453.4px;font-size:13px;line-height:13px;color:#fff;font-weight:bold">Trade Balance</div>
<div class="t" style="right:737.0px;top:453.4px;font-size:13px;line-height:13px;color:#fff;font-weight:bold">Balance YoY</div>
<div class="t" style="right:630.0px;top:453.4px;font-size:13px;line-height:13px;color:#fff;font-weight:bold">Partners</div>
<div class="t" style="right:533.4px;top:453.4px;font-size:13px;line-height:13px;color:#fff;font-weight:bold">Trade Volume</div>
<div class="t" style="right:419.5px;top:453.4px;font-size:13px;line-height:13px;color:#fff;font-weight:bold">Trade Volume LY</div>
<div class="t" style="right:295.5px;top:453.4px;font-size:13px;line-height:13px;color:#fff;font-weight:bold">Trade Volume YoY</div>
<div class="t" style="right:160.6px;top:453.4px;font-size:13px;line-height:13px;color:#fff;font-weight:bold">Volume Growth YoY</div>
<div class="t" style="right:33.0px;top:453.4px;font-size:13px;line-height:13px;color:#fff;font-weight:bold">Tariff Impact Score</div>
<div class="r" style="left:14px;top:477.6px;width:1289px;height:383px;overflow:hidden">
<div class="r" style="left:0;top:0.0px;width:1289px;height:20.7px;background:#ffffff"></div>
<div class="r" style="left:7.5px;top:6.5px;width:10px;height:10px;border:1px solid #777;box-sizing:border-box"></div>
<div class="r" style="left:9.5px;top:11.0px;width:6px;height:1px;background:#777"></div>
<div class="t" style="left:28.5px;top:4.2px;font-size:13px;line-height:13px;font-weight:bold;color:#201f1e">Americas</div>
<div class="t" style="right:989.0px;top:4.2px;font-size:13px;line-height:13px;font-weight:bold;color:#201f1e">$703.20bn</div>
<div class="t" style="right:899.0px;top:4.2px;font-size:13px;line-height:13px;font-weight:bold;color:#201f1e">$1,210.68bn</div>
<div class="t" style="right:801.5px;top:4.2px;font-size:13px;line-height:13px;font-weight:bold;color:#201f1e">($507.48bn)</div>
<div class="t" style="right:710.0px;top:4.2px;font-size:13px;line-height:13px;font-weight:bold;color:#201f1e">-42%</div>
<div class="t" style="right:603.0px;top:4.2px;font-size:13px;line-height:13px;font-weight:bold;color:#201f1e">15</div>
<div class="t" style="right:506.4px;top:4.2px;font-size:13px;line-height:13px;font-weight:bold;color:#201f1e">$1,965.04bn</div>
<div class="t" style="right:392.5px;top:4.2px;font-size:13px;line-height:13px;font-weight:bold;color:#201f1e">$1,913.88bn</div>
<div class="t" style="right:268.5px;top:4.2px;font-size:13px;line-height:13px;font-weight:bold;color:#201f1e">51.16bn</div>
<div class="t" style="right:133.6px;top:4.2px;font-size:13px;line-height:13px;font-weight:bold;color:#201f1e">2.7%</div>
<div class="t" style="right:6.0px;top:4.2px;font-size:13px;line-height:13px;font-weight:bold;color:#201f1e">$982.52bn</div>
<div class="r" style="left:0;top:20.7px;width:1289px;height:20.7px;background:#ebe9ec"></div>
<div class="r" style="left:18.5px;top:27.2px;width:10px;height:10px;border:1px solid #777;box-sizing:border-box"></div>
<div class="r" style="left:20.5px;top:31.7px;width:6px;height:1px;background:#777"></div>
<div class="t" style="left:39.5px;top:24.9px;font-size:13px;line-height:13px;font-weight:bold;color:#201f1e">North America</div>
<div class="t" style="right:989.0px;top:24.9px;font-size:13px;line-height:13px;font-weight:bold;color:#201f1e">$499.17bn</div>
<div class="t" style="right:899.0px;top:24.9px;font-size:13px;line-height:13px;font-weight:bold;color:#201f1e">$1,070.42bn</div>
<div class="t" style="right:801.5px;top:24.9px;font-size:13px;line-height:13px;font-weight:bold;color:#201f1e">($571.25bn)</div>
<div class="t" style="right:710.0px;top:24.9px;font-size:13px;line-height:13px;font-weight:bold;color:#201f1e">-53%</div>
<div class="t" style="right:603.0px;top:24.9px;font-size:13px;line-height:13px;font-weight:bold;color:#201f1e">8</div>
<div class="t" style="right:506.4px;top:24.9px;font-size:13px;line-height:13px;font-weight:bold;color:#201f1e">$1,602.01bn</div>
<div class="t" style="right:392.5px;top:24.9px;font-size:13px;line-height:13px;font-weight:bold;color:#201f1e">$1,569.59bn</div>
<div class="t" style="right:268.5px;top:24.9px;font-size:13px;line-height:13px;font-weight:bold;color:#201f1e">32.42bn</div>
<div class="t" style="right:133.6px;top:24.9px;font-size:13px;line-height:13px;font-weight:bold;color:#201f1e">2.1%</div>
<div class="t" style="right:6.0px;top:24.9px;font-size:13px;line-height:13px;font-weight:bold;color:#201f1e">$560.70bn</div>
<div class="r" style="left:0;top:41.4px;width:1289px;height:20.7px;background:#ffffff"></div>
<div class="r" style="left:29.5px;top:47.9px;width:10px;height:10px;border:1px solid #777;box-sizing:border-box"></div>
<div class="r" style="left:31.5px;top:52.4px;width:6px;height:1px;background:#777"></div>
<div class="r" style="left:34.0px;top:49.9px;width:1px;height:6px;background:#777"></div>
<div class="t" style="left:50.5px;top:45.5px;font-size:13px;line-height:13px;font-weight:bold;color:#201f1e">Canada</div>
<div class="t" style="right:989.0px;top:46.0px;font-size:12.5px;line-height:12.5px;font-weight:normal;color:#201f1e">$349.91bn</div>
<div class="t" style="right:899.0px;top:46.0px;font-size:12.5px;line-height:12.5px;font-weight:normal;color:#201f1e">$411.89bn</div>
<div class="t" style="right:801.5px;top:46.0px;font-size:12.5px;line-height:12.5px;font-weight:normal;color:#201f1e">($61.98bn)</div>
<div class="t" style="right:710.0px;top:46.0px;font-size:12.5px;line-height:12.5px;font-weight:normal;color:#201f1e">-15%</div>
<div class="t" style="right:603.0px;top:46.0px;font-size:12.5px;line-height:12.5px;font-weight:normal;color:#201f1e">1</div>
<div class="t" style="right:506.4px;top:46.0px;font-size:12.5px;line-height:12.5px;font-weight:normal;color:#201f1e">$761.79bn</div>
<div class="t" style="right:392.5px;top:46.0px;font-size:12.5px;line-height:12.5px;font-weight:normal;color:#201f1e">$772.42bn</div>
<div class="t" style="right:268.5px;top:46.0px;font-size:12.5px;line-height:12.5px;font-weight:normal;color:#201f1e">-10.62bn</div>
<div class="t" style="right:133.6px;top:46.0px;font-size:12.5px;line-height:12.5px;font-weight:normal;color:#201f1e">-1.4%</div>
<div class="t" style="right:6.0px;top:46.0px;font-size:12.5px;line-height:12.5px;font-weight:normal;color:#201f1e">$266.63bn</div>
<div class="r" style="left:0;top:62.1px;width:1289px;height:20.7px;background:#ebe9ec"></div>
<div class="r" style="left:29.5px;top:68.6px;width:10px;height:10px;border:1px solid #777;box-sizing:border-box"></div>
<div class="r" style="left:31.5px;top:73.1px;width:6px;height:1px;background:#777"></div>
<div class="r" style="left:34.0px;top:70.6px;width:1px;height:6px;background:#777"></div>
<div class="t" style="left:50.5px;top:66.2px;font-size:13px;line-height:13px;font-weight:bold;color:#201f1e">Mexico</div>
<div class="t" style="right:989.0px;top:66.7px;font-size:12.5px;line-height:12.5px;font-weight:normal;color:#201f1e">$334.04bn</div>
<div class="t" style="right:899.0px;top:66.7px;font-size:12.5px;line-height:12.5px;font-weight:normal;color:#201f1e">$505.52bn</div>
<div class="t" style="right:801.5px;top:66.7px;font-size:12.5px;line-height:12.5px;font-weight:normal;color:#201f1e">($171.48bn)</div>
<div class="t" style="right:710.0px;top:66.7px;font-size:12.5px;line-height:12.5px;font-weight:normal;color:#201f1e">-34%</div>
<div class="t" style="right:603.0px;top:66.7px;font-size:12.5px;line-height:12.5px;font-weight:normal;color:#201f1e">1</div>
<div class="t" style="right:506.4px;top:66.7px;font-size:12.5px;line-height:12.5px;font-weight:normal;color:#201f1e">$839.55bn</div>
<div class="t" style="right:392.5px;top:66.7px;font-size:12.5px;line-height:12.5px;font-weight:normal;color:#201f1e">$796.54bn</div>
<div class="t" style="right:268.5px;top:66.7px;font-size:12.5px;line-height:12.5px;font-weight:normal;color:#201f1e">43.01bn</div>
<div class="t" style="right:133.6px;top:66.7px;font-size:12.5px;line-height:12.5px;font-weight:normal;color:#201f1e">5.4%</div>
<div class="t" style="right:6.0px;top:66.7px;font-size:12.5px;line-height:12.5px;font-weight:normal;color:#201f1e">$209.89bn</div>
<div class="r" style="left:0;top:82.8px;width:1289px;height:20.7px;background:#ffffff"></div>
<div class="r" style="left:29.5px;top:89.3px;width:10px;height:10px;border:1px solid #777;box-sizing:border-box"></div>
<div class="r" style="left:31.5px;top:93.8px;width:6px;height:1px;background:#777"></div>
<div class="r" style="left:34.0px;top:91.3px;width:1px;height:6px;background:#777"></div>
<div class="t" style="left:50.5px;top:87.0px;font-size:13px;line-height:13px;font-weight:bold;color:#201f1e">Bermuda</div>
<div class="t" style="right:989.0px;top:87.4px;font-size:12.5px;line-height:12.5px;font-weight:normal;color:#201f1e">$0.04bn</div>
<div class="t" style="right:899.0px;top:87.4px;font-size:12.5px;line-height:12.5px;font-weight:normal;color:#201f1e">$0.53bn</div>
<div class="t" style="right:801.5px;top:87.4px;font-size:12.5px;line-height:12.5px;font-weight:normal;color:#201f1e">($0.49bn)</div>
<div class="t" style="right:710.0px;top:87.4px;font-size:12.5px;line-height:12.5px;font-weight:normal;color:#201f1e">-93%</div>
<div class="t" style="right:603.0px;top:87.4px;font-size:12.5px;line-height:12.5px;font-weight:normal;color:#201f1e">1</div>
<div class="t" style="right:506.4px;top:87.4px;font-size:12.5px;line-height:12.5px;font-weight:normal;color:#201f1e">$0.57bn</div>
<div class="t" style="right:392.5px;top:87.4px;font-size:12.5px;line-height:12.5px;font-weight:normal;color:#201f1e">$0.59bn</div>
<div class="t" style="right:268.5px;top:87.4px;font-size:12.5px;line-height:12.5px;font-weight:normal;color:#201f1e">-0.02bn</div>
<div class="t" style="right:133.6px;top:87.4px;font-size:12.5px;line-height:12.5px;font-weight:normal;color:#201f1e">-3.5%</div>
<div class="t" style="right:6.0px;top:87.4px;font-size:12.5px;line-height:12.5px;font-weight:normal;color:#201f1e">$0.00bn</div>
<div class="r" style="left:0;top:103.5px;width:1289px;height:20.7px;background:#ebe9ec"></div>
<div class="r" style="left:29.5px;top:110.0px;width:10px;height:10px;border:1px solid #777;box-sizing:border-box"></div>
<div class="r" style="left:31.5px;top:114.5px;width:6px;height:1px;background:#777"></div>
<div class="r" style="left:34.0px;top:112.0px;width:1px;height:6px;background:#777"></div>
<div class="t" style="left:50.5px;top:107.7px;font-size:13px;line-height:13px;font-weight:bold;color:#201f1e">Greenland</div>
<div class="t" style="right:989.0px;top:108.1px;font-size:12.5px;line-height:12.5px;font-weight:normal;color:#201f1e">$0.02bn</div>
<div class="t" style="right:899.0px;top:108.1px;font-size:12.5px;line-height:12.5px;font-weight:normal;color:#201f1e">$0.06bn</div>
<div class="t" style="right:801.5px;top:108.1px;font-size:12.5px;line-height:12.5px;font-weight:normal;color:#201f1e">($0.04bn)</div>
<div class="t" style="right:710.0px;top:108.1px;font-size:12.5px;line-height:12.5px;font-weight:normal;color:#201f1e">-66%</div>
<div class="t" style="right:603.0px;top:108.1px;font-size:12.5px;line-height:12.5px;font-weight:normal;color:#201f1e">1</div>
<div class="t" style="right:506.4px;top:108.1px;font-size:12.5px;line-height:12.5px;font-weight:normal;color:#201f1e">$0.08bn</div>
<div class="t" style="right:392.5px;top:108.1px;font-size:12.5px;line-height:12.5px;font-weight:normal;color:#201f1e">$0.03bn</div>
<div class="t" style="right:268.5px;top:108.1px;font-size:12.5px;line-height:12.5px;font-weight:normal;color:#201f1e">0.05bn</div>
<div class="t" style="right:133.6px;top:108.1px;font-size:12.5px;line-height:12.5px;font-weight:normal;color:#201f1e">136.7%</div>
<div class="t" style="right:6.0px;top:108.1px;font-size:12.5px;line-height:12.5px;font-weight:normal;color:#201f1e">$0.00bn</div>
<div class="r" style="left:0;top:124.2px;width:1289px;height:20.7px;background:#ffffff"></div>
<div class="r" style="left:29.5px;top:130.7px;width:10px;height:10px;border:1px solid #777;box-sizing:border-box"></div>
<div class="r" style="left:31.5px;top:135.2px;width:6px;height:1px;background:#777"></div>
<div class="r" style="left:34.0px;top:132.7px;width:1px;height:6px;background:#777"></div>
<div class="t" style="left:50.5px;top:128.3px;font-size:13px;line-height:13px;font-weight:bold;color:#201f1e">Saint Pierre and Miquelon</div>
<div class="t" style="right:989.0px;top:128.8px;font-size:12.5px;line-height:12.5px;font-weight:normal;color:#201f1e">$0.00bn</div>
<div class="t" style="right:899.0px;top:128.8px;font-size:12.5px;line-height:12.5px;font-weight:normal;color:#201f1e">$0.00bn</div>
<div class="t" style="right:801.5px;top:128.8px;font-size:12.5px;line-height:12.5px;font-weight:normal;color:#201f1e">($0.00bn)</div>
<div class="t" style="right:710.0px;top:128.8px;font-size:12.5px;line-height:12.5px;font-weight:normal;color:#201f1e">-99%</div>
<div class="t" style="right:603.0px;top:128.8px;font-size:12.5px;line-height:12.5px;font-weight:normal;color:#201f1e">1</div>
<div class="t" style="right:506.4px;top:128.8px;font-size:12.5px;line-height:12.5px;font-weight:normal;color:#201f1e">$0.00bn</div>
<div class="t" style="right:392.5px;top:128.8px;font-size:12.5px;line-height:12.5px;font-weight:normal;color:#201f1e">$0.00bn</div>
<div class="t" style="right:268.5px;top:128.8px;font-size:12.5px;line-height:12.5px;font-weight:normal;color:#201f1e">0.00bn</div>
<div class="t" style="right:133.6px;top:128.8px;font-size:12.5px;line-height:12.5px;font-weight:normal;color:#201f1e">1713.9%</div>
<div class="t" style="right:6.0px;top:128.8px;font-size:12.5px;line-height:12.5px;font-weight:normal;color:#201f1e">$0.00bn</div>
<div class="r" style="left:0;top:144.9px;width:1289px;height:20.7px;background:#ebe9ec"></div>
<div class="r" style="left:18.5px;top:151.4px;width:10px;height:10px;border:1px solid #777;box-sizing:border-box"></div>
<div class="r" style="left:20.5px;top:155.9px;width:6px;height:1px;background:#777"></div>
<div class="r" style="left:23.0px;top:153.4px;width:1px;height:6px;background:#777"></div>
<div class="t" style="left:39.5px;top:149.0px;font-size:13px;line-height:13px;font-weight:bold;color:#201f1e">South America</div>
<div class="t" style="right:989.0px;top:149.0px;font-size:13px;line-height:13px;font-weight:bold;color:#201f1e">$125.02bn</div>
<div class="t" style="right:899.0px;top:149.0px;font-size:13px;line-height:13px;font-weight:bold;color:#201f1e">$115.22bn</div>
<div class="t" style="right:801.5px;top:149.0px;font-size:13px;line-height:13px;font-weight:bold;color:#201f1e">$9.80bn</div>
<div class="t" style="right:710.0px;top:149.0px;font-size:13px;line-height:13px;font-weight:bold;color:#201f1e">9%</div>
<div class="t" style="right:603.0px;top:149.0px;font-size:13px;line-height:13px;font-weight:bold;color:#201f1e">4</div>
<div class="t" style="right:506.4px;top:149.0px;font-size:13px;line-height:13px;font-weight:bold;color:#201f1e">$240.24bn</div>
<div class="t" style="right:392.5px;top:149.0px;font-size:13px;line-height:13px;font-weight:bold;color:#201f1e">$224.99bn</div>
<div class="t" style="right:268.5px;top:149.0px;font-size:13px;line-height:13px;font-weight:bold;color:#201f1e">15.25bn</div>
<div class="t" style="right:133.6px;top:149.0px;font-size:13px;line-height:13px;font-weight:bold;color:#201f1e">6.8%</div>
<div class="t" style="right:6.0px;top:149.0px;font-size:13px;line-height:13px;font-weight:bold;color:#201f1e">$120.12bn</div>
<div class="r" style="left:0;top:165.6px;width:1289px;height:20.7px;background:#ffffff"></div>
<div class="r" style="left:18.5px;top:172.1px;width:10px;height:10px;border:1px solid #777;box-sizing:border-box"></div>
<div class="r" style="left:20.5px;top:176.6px;width:6px;height:1px;background:#777"></div>
<div class="r" style="left:23.0px;top:174.1px;width:1px;height:6px;background:#777"></div>
<div class="t" style="left:39.5px;top:169.7px;font-size:13px;line-height:13px;font-weight:bold;color:#201f1e">Central America</div>
<div class="t" style="right:989.0px;top:169.7px;font-size:13px;line-height:13px;font-weight:bold;color:#201f1e">$44.85bn</div>
<div class="t" style="right:899.0px;top:169.7px;font-size:13px;line-height:13px;font-weight:bold;color:#201f1e">$29.74bn</div>
<div class="t" style="right:801.5px;top:169.7px;font-size:13px;line-height:13px;font-weight:bold;color:#201f1e">$15.11bn</div>
<div class="t" style="right:710.0px;top:169.7px;font-size:13px;line-height:13px;font-weight:bold;color:#201f1e">51%</div>
<div class="t" style="right:603.0px;top:169.7px;font-size:13px;line-height:13px;font-weight:bold;color:#201f1e">2</div>
<div class="t" style="right:506.4px;top:169.7px;font-size:13px;line-height:13px;font-weight:bold;color:#201f1e">$74.59bn</div>
<div class="t" style="right:392.5px;top:169.7px;font-size:13px;line-height:13px;font-weight:bold;color:#201f1e">$72.45bn</div>
<div class="t" style="right:268.5px;top:169.7px;font-size:13px;line-height:13px;font-weight:bold;color:#201f1e">2.15bn</div>
<div class="t" style="right:133.6px;top:169.7px;font-size:13px;line-height:13px;font-weight:bold;color:#201f1e">3.0%</div>
<div class="t" style="right:6.0px;top:169.7px;font-size:13px;line-height:13px;font-weight:bold;color:#201f1e">$13.43bn</div>
<div class="r" style="left:0;top:186.3px;width:1289px;height:20.7px;background:#ebe9ec"></div>
<div class="r" style="left:18.5px;top:192.8px;width:10px;height:10px;border:1px solid #777;box-sizing:border-box"></div>
<div class="r" style="left:20.5px;top:197.3px;width:6px;height:1px;background:#777"></div>
<div class="r" style="left:23.0px;top:194.8px;width:1px;height:6px;background:#777"></div>
<div class="t" style="left:39.5px;top:190.4px;font-size:13px;line-height:13px;font-weight:bold;color:#201f1e">Caribbean</div>
<div class="t" style="right:989.0px;top:190.4px;font-size:13px;line-height:13px;font-weight:bold;color:#201f1e">$34.16bn</div>
<div class="t" style="right:899.0px;top:190.4px;font-size:13px;line-height:13px;font-weight:bold;color:#201f1e">$14.05bn</div>
<div class="t" style="right:801.5px;top:190.4px;font-size:13px;line-height:13px;font-weight:bold;color:#201f1e">$20.11bn</div>
<div class="t" style="right:710.0px;top:190.4px;font-size:13px;line-height:13px;font-weight:bold;color:#201f1e">143%</div>
<div class="t" style="right:603.0px;top:190.4px;font-size:13px;line-height:13px;font-weight:bold;color:#201f1e">1</div>
<div class="t" style="right:506.4px;top:190.4px;font-size:13px;line-height:13px;font-weight:bold;color:#201f1e">$48.20bn</div>
<div class="t" style="right:392.5px;top:190.4px;font-size:13px;line-height:13px;font-weight:bold;color:#201f1e">$46.85bn</div>
<div class="t" style="right:268.5px;top:190.4px;font-size:13px;line-height:13px;font-weight:bold;color:#201f1e">1.35bn</div>
<div class="t" style="right:133.6px;top:190.4px;font-size:13px;line-height:13px;font-weight:bold;color:#201f1e">2.9%</div>
<div class="t" style="right:6.0px;top:190.4px;font-size:13px;line-height:13px;font-weight:bold;color:#201f1e">$7.23bn</div>
<div class="r" style="left:0;top:207.0px;width:1289px;height:20.7px;background:#ffffff"></div>
<div class="r" style="left:7.5px;top:213.5px;width:10px;height:10px;border:1px solid #777;box-sizing:border-box"></div>
<div class="r" style="left:9.5px;top:218.0px;width:6px;height:1px;background:#777"></div>
<div class="r" style="left:12.0px;top:215.5px;width:1px;height:6px;background:#777"></div>
<div class="t" style="left:28.5px;top:211.1px;font-size:13px;line-height:13px;font-weight:bold;color:#201f1e">APAC</div>
<div class="t" style="right:989.0px;top:211.1px;font-size:13px;line-height:13px;font-weight:bold;color:#201f1e">$598.94bn</div>
<div class="t" style="right:899.0px;top:211.1px;font-size:13px;line-height:13px;font-weight:bold;color:#201f1e">$1,356.28bn</div>
<div class="t" style="right:801.5px;top:211.1px;font-size:13px;line-height:13px;font-weight:bold;color:#201f1e">($757.34bn)</div>
<div class="t" style="right:710.0px;top:211.1px;font-size:13px;line-height:13px;font-weight:bold;color:#201f1e">-56%</div>
<div class="t" style="right:603.0px;top:211.1px;font-size:13px;line-height:13px;font-weight:bold;color:#201f1e">23</div>
<div class="t" style="right:506.4px;top:211.1px;font-size:13px;line-height:13px;font-weight:bold;color:#201f1e">$1,955.22bn</div>
<div class="t" style="right:392.5px;top:211.1px;font-size:13px;line-height:13px;font-weight:bold;color:#201f1e">$1,831.89bn</div>
<div class="t" style="right:268.5px;top:211.1px;font-size:13px;line-height:13px;font-weight:bold;color:#201f1e">123.32bn</div>
<div class="t" style="right:133.6px;top:211.1px;font-size:13px;line-height:13px;font-weight:bold;color:#201f1e">6.7%</div>
<div class="t" style="right:6.0px;top:211.1px;font-size:13px;line-height:13px;font-weight:bold;color:#201f1e">$977.61bn</div>
<div class="r" style="left:0;top:227.7px;width:1289px;height:20.7px;background:#ebe9ec"></div>
<div class="r" style="left:7.5px;top:234.2px;width:10px;height:10px;border:1px solid #777;box-sizing:border-box"></div>
<div class="r" style="left:9.5px;top:238.7px;width:6px;height:1px;background:#777"></div>
<div class="t" style="left:28.5px;top:231.8px;font-size:13px;line-height:13px;font-weight:bold;color:#201f1e">Europe</div>
<div class="t" style="right:989.0px;top:231.8px;font-size:13px;line-height:13px;font-weight:bold;color:#201f1e">$497.19bn</div>
<div class="t" style="right:899.0px;top:231.8px;font-size:13px;line-height:13px;font-weight:bold;color:#201f1e">$762.57bn</div>
<div class="t" style="right:801.5px;top:231.8px;font-size:13px;line-height:13px;font-weight:bold;color:#201f1e">($265.38bn)</div>
<div class="t" style="right:710.0px;top:231.8px;font-size:13px;line-height:13px;font-weight:bold;color:#201f1e">-35%</div>
<div class="t" style="right:603.0px;top:231.8px;font-size:13px;line-height:13px;font-weight:bold;color:#201f1e">32</div>
<div class="t" style="right:506.4px;top:231.8px;font-size:13px;line-height:13px;font-weight:bold;color:#201f1e">$1,259.77bn</div>
<div class="t" style="right:392.5px;top:231.8px;font-size:13px;line-height:13px;font-weight:bold;color:#201f1e">$1,210.23bn</div>
<div class="t" style="right:268.5px;top:231.8px;font-size:13px;line-height:13px;font-weight:bold;color:#201f1e">49.54bn</div>
<div class="t" style="right:133.6px;top:231.8px;font-size:13px;line-height:13px;font-weight:bold;color:#201f1e">4.1%</div>
<div class="t" style="right:6.0px;top:231.8px;font-size:13px;line-height:13px;font-weight:bold;color:#201f1e">$491.31bn</div>
<div class="r" style="left:0;top:248.4px;width:1289px;height:20.7px;background:#ffffff"></div>
<div class="r" style="left:18.5px;top:254.9px;width:10px;height:10px;border:1px solid #777;box-sizing:border-box"></div>
<div class="r" style="left:20.5px;top:259.4px;width:6px;height:1px;background:#777"></div>
<div class="t" style="left:39.5px;top:252.5px;font-size:13px;line-height:13px;font-weight:bold;color:#201f1e">Western Europe</div>
<div class="t" style="right:989.0px;top:252.5px;font-size:13px;line-height:13px;font-weight:bold;color:#201f1e">$368.83bn</div>
<div class="t" style="right:899.0px;top:252.5px;font-size:13px;line-height:13px;font-weight:bold;color:#201f1e">$535.42bn</div>
<div class="t" style="right:801.5px;top:252.5px;font-size:13px;line-height:13px;font-weight:bold;color:#201f1e">($166.58bn)</div>
<div class="t" style="right:710.0px;top:252.5px;font-size:13px;line-height:13px;font-weight:bold;color:#201f1e">-31%</div>
<div class="t" style="right:603.0px;top:252.5px;font-size:13px;line-height:13px;font-weight:bold;color:#201f1e">6</div>
<div class="t" style="right:506.4px;top:252.5px;font-size:13px;line-height:13px;font-weight:bold;color:#201f1e">$904.25bn</div>
<div class="t" style="right:392.5px;top:252.5px;font-size:13px;line-height:13px;font-weight:bold;color:#201f1e">$865.84bn</div>
<div class="t" style="right:268.5px;top:252.5px;font-size:13px;line-height:13px;font-weight:bold;color:#201f1e">38.40bn</div>
<div class="t" style="right:133.6px;top:252.5px;font-size:13px;line-height:13px;font-weight:bold;color:#201f1e">4.4%</div>
<div class="t" style="right:6.0px;top:252.5px;font-size:13px;line-height:13px;font-weight:bold;color:#201f1e">$352.66bn</div>
<div class="r" style="left:0;top:269.1px;width:1289px;height:20.7px;background:#ebe9ec"></div>
<div class="r" style="left:29.5px;top:275.6px;width:10px;height:10px;border:1px solid #777;box-sizing:border-box"></div>
<div class="r" style="left:31.5px;top:280.1px;width:6px;height:1px;background:#777"></div>
<div class="r" style="left:34.0px;top:277.6px;width:1px;height:6px;background:#777"></div>
<div class="t" style="left:50.5px;top:273.2px;font-size:13px;line-height:13px;font-weight:bold;color:#201f1e">Netherlands</div>
<div class="t" style="right:989.0px;top:273.7px;font-size:12.5px;line-height:12.5px;font-weight:normal;color:#201f1e">$88.22bn</div>
<div class="t" style="right:899.0px;top:273.7px;font-size:12.5px;line-height:12.5px;font-weight:normal;color:#201f1e">$34.06bn</div>
<div class="t" style="right:801.5px;top:273.7px;font-size:12.5px;line-height:12.5px;font-weight:normal;color:#201f1e">$54.17bn</div>
<div class="t" style="right:710.0px;top:273.7px;font-size:12.5px;line-height:12.5px;font-weight:normal;color:#201f1e">159%</div>
<div class="t" style="right:603.0px;top:273.7px;font-size:12.5px;line-height:12.5px;font-weight:normal;color:#201f1e"></div>
<div class="t" style="right:506.4px;top:273.7px;font-size:12.5px;line-height:12.5px;font-weight:normal;color:#201f1e">$122.28bn</div>
<div class="t" style="right:392.5px;top:273.7px;font-size:12.5px;line-height:12.5px;font-weight:normal;color:#201f1e">$120.15bn</div>
<div class="t" style="right:268.5px;top:273.7px;font-size:12.5px;line-height:12.5px;font-weight:normal;color:#201f1e">2.12bn</div>
<div class="t" style="right:133.6px;top:273.7px;font-size:12.5px;line-height:12.5px;font-weight:normal;color:#201f1e">1.8%</div>
<div class="t" style="right:6.0px;top:273.7px;font-size:12.5px;line-height:12.5px;font-weight:normal;color:#201f1e">$18.34bn</div>
<div class="r" style="left:0;top:289.8px;width:1289px;height:20.7px;background:#ffffff"></div>
<div class="r" style="left:29.5px;top:296.3px;width:10px;height:10px;border:1px solid #777;box-sizing:border-box"></div>
<div class="r" style="left:31.5px;top:300.8px;width:6px;height:1px;background:#777"></div>
<div class="r" style="left:34.0px;top:298.3px;width:1px;height:6px;background:#777"></div>
<div class="t" style="left:50.5px;top:293.9px;font-size:13px;line-height:13px;font-weight:bold;color:#201f1e">United Kingdom</div>
<div class="t" style="right:989.0px;top:294.4px;font-size:12.5px;line-height:12.5px;font-weight:normal;color:#201f1e">$79.53bn</div>
<div class="t" style="right:899.0px;top:294.4px;font-size:12.5px;line-height:12.5px;font-weight:normal;color:#201f1e">$68.17bn</div>
<div class="t" style="right:801.5px;top:294.4px;font-size:12.5px;line-height:12.5px;font-weight:normal;color:#201f1e">$11.36bn</div>
<div class="t" style="right:710.0px;top:294.4px;font-size:12.5px;line-height:12.5px;font-weight:normal;color:#201f1e">17%</div>
<div class="t" style="right:603.0px;top:294.4px;font-size:12.5px;line-height:12.5px;font-weight:normal;color:#201f1e"></div>
<div class="t" style="right:506.4px;top:294.4px;font-size:12.5px;line-height:12.5px;font-weight:normal;color:#201f1e">$147.70bn</div>
<div class="t" style="right:392.5px;top:294.4px;font-size:12.5px;line-height:12.5px;font-weight:normal;color:#201f1e">$139.20bn</div>
<div class="t" style="right:268.5px;top:294.4px;font-size:12.5px;line-height:12.5px;font-weight:normal;color:#201f1e">8.50bn</div>
<div class="t" style="right:133.6px;top:294.4px;font-size:12.5px;line-height:12.5px;font-weight:normal;color:#201f1e">6.1%</div>
<div class="t" style="right:6.0px;top:294.4px;font-size:12.5px;line-height:12.5px;font-weight:normal;color:#201f1e">$14.77bn</div>
<div class="r" style="left:0;top:310.5px;width:1289px;height:20.7px;background:#ebe9ec"></div>
<div class="r" style="left:29.5px;top:317.0px;width:10px;height:10px;border:1px solid #777;box-sizing:border-box"></div>
<div class="r" style="left:31.5px;top:321.5px;width:6px;height:1px;background:#777"></div>
<div class="r" style="left:34.0px;top:319.0px;width:1px;height:6px;background:#777"></div>
<div class="t" style="left:50.5px;top:314.6px;font-size:13px;line-height:13px;font-weight:bold;color:#201f1e">Germany</div>
<div class="t" style="right:989.0px;top:315.1px;font-size:12.5px;line-height:12.5px;font-weight:normal;color:#201f1e">$75.72bn</div>
<div class="t" style="right:899.0px;top:315.1px;font-size:12.5px;line-height:12.5px;font-weight:normal;color:#201f1e">$160.38bn</div>
<div class="t" style="right:801.5px;top:315.1px;font-size:12.5px;line-height:12.5px;font-weight:normal;color:#201f1e">($84.66bn)</div>
<div class="t" style="right:710.0px;top:315.1px;font-size:12.5px;line-height:12.5px;font-weight:normal;color:#201f1e">-53%</div>
<div class="t" style="right:603.0px;top:315.1px;font-size:12.5px;line-height:12.5px;font-weight:normal;color:#201f1e">1</div>
<div class="t" style="right:506.4px;top:315.1px;font-size:12.5px;line-height:12.5px;font-weight:normal;color:#201f1e">$236.10bn</div>
<div class="t" style="right:392.5px;top:315.1px;font-size:12.5px;line-height:12.5px;font-weight:normal;color:#201f1e">$235.87bn</div>
<div class="t" style="right:268.5px;top:315.1px;font-size:12.5px;line-height:12.5px;font-weight:normal;color:#201f1e">0.24bn</div>
<div class="t" style="right:133.6px;top:315.1px;font-size:12.5px;line-height:12.5px;font-weight:normal;color:#201f1e">0.1%</div>
<div class="t" style="right:6.0px;top:315.1px;font-size:12.5px;line-height:12.5px;font-weight:normal;color:#201f1e">$35.42bn</div>
<div class="r" style="left:0;top:331.2px;width:1289px;height:20.7px;background:#ffffff"></div>
<div class="r" style="left:29.5px;top:337.7px;width:10px;height:10px;border:1px solid #777;box-sizing:border-box"></div>
<div class="r" style="left:31.5px;top:342.2px;width:6px;height:1px;background:#777"></div>
<div class="r" style="left:34.0px;top:339.7px;width:1px;height:6px;background:#777"></div>
<div class="t" style="left:50.5px;top:335.3px;font-size:13px;line-height:13px;font-weight:bold;color:#201f1e">France</div>
<div class="t" style="right:989.0px;top:335.8px;font-size:12.5px;line-height:12.5px;font-weight:normal;color:#201f1e">$43.55bn</div>
<div class="t" style="right:899.0px;top:335.8px;font-size:12.5px;line-height:12.5px;font-weight:normal;color:#201f1e">$59.78bn</div>
<div class="t" style="right:801.5px;top:335.8px;font-size:12.5px;line-height:12.5px;font-weight:normal;color:#201f1e">($16.24bn)</div>
<div class="t" style="right:710.0px;top:335.8px;font-size:12.5px;line-height:12.5px;font-weight:normal;color:#201f1e">-27%</div>
<div class="t" style="right:603.0px;top:335.8px;font-size:12.5px;line-height:12.5px;font-weight:normal;color:#201f1e">1</div>
<div class="t" style="right:506.4px;top:335.8px;font-size:12.5px;line-height:12.5px;font-weight:normal;color:#201f1e">$103.33bn</div>
<div class="t" style="right:392.5px;top:335.8px;font-size:12.5px;line-height:12.5px;font-weight:normal;color:#201f1e">$101.98bn</div>
<div class="t" style="right:268.5px;top:335.8px;font-size:12.5px;line-height:12.5px;font-weight:normal;color:#201f1e">1.35bn</div>
<div class="t" style="right:133.6px;top:335.8px;font-size:12.5px;line-height:12.5px;font-weight:normal;color:#201f1e">1.3%</div>
<div class="t" style="right:6.0px;top:335.8px;font-size:12.5px;line-height:12.5px;font-weight:normal;color:#201f1e">$15.50bn</div>
<div class="r" style="left:0;top:351.9px;width:1289px;height:20.7px;background:#ebe9ec"></div>
<div class="r" style="left:29.5px;top:358.4px;width:10px;height:10px;border:1px solid #777;box-sizing:border-box"></div>
<div class="r" style="left:31.5px;top:362.9px;width:6px;height:1px;background:#777"></div>
<div class="r" style="left:34.0px;top:360.4px;width:1px;height:6px;background:#777"></div>
<div class="t" style="left:50.5px;top:356.0px;font-size:13px;line-height:13px;font-weight:bold;color:#201f1e">Belgium</div>
<div class="t" style="right:989.0px;top:356.5px;font-size:12.5px;line-height:12.5px;font-weight:normal;color:#201f1e">$34.20bn</div>
<div class="t" style="right:899.0px;top:356.5px;font-size:12.5px;line-height:12.5px;font-weight:normal;color:#201f1e">$27.79bn</div>
<div class="t" style="right:801.5px;top:356.5px;font-size:12.5px;line-height:12.5px;font-weight:normal;color:#201f1e">$6.41bn</div>
<div class="t" style="right:710.0px;top:356.5px;font-size:12.5px;line-height:12.5px;font-weight:normal;color:#201f1e">23%</div>
<div class="t" style="right:603.0px;top:356.5px;font-size:12.5px;line-height:12.5px;font-weight:normal;color:#201f1e"></div>
<div class="t" style="right:506.4px;top:356.5px;font-size:12.5px;line-height:12.5px;font-weight:normal;color:#201f1e">$61.99bn</div>
<div class="t" style="right:392.5px;top:356.5px;font-size:12.5px;line-height:12.5px;font-weight:normal;color:#201f1e">$61.19bn</div>
<div class="t" style="right:268.5px;top:356.5px;font-size:12.5px;line-height:12.5px;font-weight:normal;color:#201f1e">0.79bn</div>
<div class="t" style="right:133.6px;top:356.5px;font-size:12.5px;line-height:12.5px;font-weight:normal;color:#201f1e">1.3%</div>
<div class="t" style="right:6.0px;top:356.5px;font-size:12.5px;line-height:12.5px;font-weight:normal;color:#201f1e">$9.30bn</div>
<div class="r" style="left:0;top:372.6px;width:1289px;height:20.7px;background:#ffffff"></div>
<div class="r" style="left:29.5px;top:379.1px;width:10px;height:10px;border:1px solid #777;box-sizing:border-box"></div>
<div class="r" style="left:31.5px;top:383.6px;width:6px;height:1px;background:#777"></div>
<div class="r" style="left:34.0px;top:381.1px;width:1px;height:6px;background:#777"></div>
<div class="t" style="left:50.5px;top:376.7px;font-size:13px;line-height:13px;font-weight:bold;color:#201f1e">Switzerland</div>
<div class="t" style="right:989.0px;top:377.2px;font-size:12.5px;line-height:12.5px;font-weight:normal;color:#201f1e">$25.04bn</div>
<div class="t" style="right:899.0px;top:377.2px;font-size:12.5px;line-height:12.5px;font-weight:normal;color:#201f1e">$63.33bn</div>
<div class="t" style="right:801.5px;top:377.2px;font-size:12.5px;line-height:12.5px;font-weight:normal;color:#201f1e">($38.28bn)</div>
<div class="t" style="right:710.0px;top:377.2px;font-size:12.5px;line-height:12.5px;font-weight:normal;color:#201f1e">-60%</div>
<div class="t" style="right:603.0px;top:377.2px;font-size:12.5px;line-height:12.5px;font-weight:normal;color:#201f1e">1</div>
<div class="t" style="right:506.4px;top:377.2px;font-size:12.5px;line-height:12.5px;font-weight:normal;color:#201f1e">$88.37bn</div>
<div class="t" style="right:392.5px;top:377.2px;font-size:12.5px;line-height:12.5px;font-weight:normal;color:#201f1e">$80.09bn</div>
<div class="t" style="right:268.5px;top:377.2px;font-size:12.5px;line-height:12.5px;font-weight:normal;color:#201f1e">8.28bn</div>
<div class="t" style="right:133.6px;top:377.2px;font-size:12.5px;line-height:12.5px;font-weight:normal;color:#201f1e">10.3%</div>
<div class="t" style="right:6.0px;top:377.2px;font-size:12.5px;line-height:12.5px;font-weight:normal;color:#201f1e">$34.46bn</div>
<div class="r" style="left:0;top:20.2px;width:1289px;height:1px;background:#a4a4a4"></div>
<div class="r" style="left:0;top:40.9px;width:1289px;height:1px;background:#a4a4a4"></div>
<div class="r" style="left:0;top:61.6px;width:1289px;height:1px;background:#a4a4a4"></div>
<div class="r" style="left:0;top:82.3px;width:1289px;height:1px;background:#a4a4a4"></div>
<div class="r" style="left:0;top:103.0px;width:1289px;height:1px;background:#a4a4a4"></div>
<div class="r" style="left:0;top:123.7px;width:1289px;height:1px;background:#a4a4a4"></div>
<div class="r" style="left:0;top:144.4px;width:1289px;height:1px;background:#a4a4a4"></div>
<div class="r" style="left:0;top:165.1px;width:1289px;height:1px;background:#a4a4a4"></div>
<div class="r" style="left:0;top:185.8px;width:1289px;height:1px;background:#a4a4a4"></div>
<div class="r" style="left:0;top:206.5px;width:1289px;height:1px;background:#a4a4a4"></div>
<div class="r" style="left:0;top:227.2px;width:1289px;height:1px;background:#a4a4a4"></div>
<div class="r" style="left:0;top:247.9px;width:1289px;height:1px;background:#a4a4a4"></div>
<div class="r" style="left:0;top:268.6px;width:1289px;height:1px;background:#a4a4a4"></div>
<div class="r" style="left:0;top:289.3px;width:1289px;height:1px;background:#a4a4a4"></div>
<div class="r" style="left:0;top:310.0px;width:1289px;height:1px;background:#a4a4a4"></div>
<div class="r" style="left:0;top:330.7px;width:1289px;height:1px;background:#a4a4a4"></div>
<div class="r" style="left:0;top:351.4px;width:1289px;height:1px;background:#a4a4a4"></div>
<div class="r" style="left:0;top:372.1px;width:1289px;height:1px;background:#a4a4a4"></div>
<div class="r" style="left:0;top:392.8px;width:1289px;height:1px;background:#a4a4a4"></div>
</div>
<div class="r" style="left:230.0px;top:477.2px;width:1.0px;height:404.0px;background:#4a90d9"></div>
<div class="r" style="left:320.0px;top:477.2px;width:1.0px;height:404.0px;background:#a9a9a9"></div>
<div class="r" style="left:410.0px;top:477.2px;width:1.0px;height:404.0px;background:#a9a9a9"></div>
<div class="r" style="left:507.5px;top:477.2px;width:1.0px;height:404.0px;background:#a9a9a9"></div>
<div class="r" style="left:599.0px;top:477.2px;width:1.0px;height:404.0px;background:#a9a9a9"></div>
<div class="r" style="left:706.0px;top:477.2px;width:1.0px;height:404.0px;background:#a9a9a9"></div>
<div class="r" style="left:802.6px;top:477.2px;width:1.0px;height:404.0px;background:#a9a9a9"></div>
<div class="r" style="left:916.5px;top:477.2px;width:1.0px;height:404.0px;background:#a9a9a9"></div>
<div class="r" style="left:1040.5px;top:477.2px;width:1.0px;height:404.0px;background:#a9a9a9"></div>
<div class="r" style="left:1175.4px;top:477.2px;width:1.0px;height:404.0px;background:#a9a9a9"></div>
<div class="r" style="left:14.0px;top:860.6px;width:1289.0px;height:20.5px;background:#fff"></div>
<div class="r" style="left:230.0px;top:860.6px;width:1.0px;height:20.5px;background:#4a90d9"></div>
<div class="r" style="left:320.0px;top:860.6px;width:1.0px;height:20.5px;background:#a9a9a9"></div>
<div class="r" style="left:410.0px;top:860.6px;width:1.0px;height:20.5px;background:#a9a9a9"></div>
<div class="r" style="left:507.5px;top:860.6px;width:1.0px;height:20.5px;background:#a9a9a9"></div>
<div class="r" style="left:599.0px;top:860.6px;width:1.0px;height:20.5px;background:#a9a9a9"></div>
<div class="r" style="left:706.0px;top:860.6px;width:1.0px;height:20.5px;background:#a9a9a9"></div>
<div class="r" style="left:802.6px;top:860.6px;width:1.0px;height:20.5px;background:#a9a9a9"></div>
<div class="r" style="left:916.5px;top:860.6px;width:1.0px;height:20.5px;background:#a9a9a9"></div>
<div class="r" style="left:1040.5px;top:860.6px;width:1.0px;height:20.5px;background:#a9a9a9"></div>
<div class="r" style="left:1175.4px;top:860.6px;width:1.0px;height:20.5px;background:#a9a9a9"></div>
<div class="t" style="left:42.0px;top:864.5px;font-size:13px;line-height:13px;font-weight:bold;color:#201f1e">Total</div>
<div class="t" style="right:1016.0px;top:864.5px;font-size:13px;line-height:13px;font-weight:bold;color:#201f1e">$2,061.69bn</div>
<div class="t" style="right:926.0px;top:864.5px;font-size:13px;line-height:13px;font-weight:bold;color:#201f1e">$3,266.41bn</div>
<div class="t" style="right:828.5px;top:864.5px;font-size:13px;line-height:13px;font-weight:bold;color:#201f1e">($1,204.72bn)</div>
<div class="t" style="right:737.0px;top:864.5px;font-size:13px;line-height:13px;font-weight:bold;color:#201f1e">-37%</div>
<div class="t" style="right:630.0px;top:864.5px;font-size:13px;line-height:13px;font-weight:bold;color:#201f1e">103</div>
<div class="t" style="right:533.4px;top:864.5px;font-size:13px;line-height:13px;font-weight:bold;color:#201f1e">$5,328.10bn</div>
<div class="t" style="right:419.5px;top:864.5px;font-size:13px;line-height:13px;font-weight:bold;color:#201f1e">$5,097.28bn</div>
<div class="t" style="right:295.5px;top:864.5px;font-size:13px;line-height:13px;font-weight:bold;color:#201f1e">230.83bn</div>
<div class="t" style="right:160.6px;top:864.5px;font-size:13px;line-height:13px;font-weight:bold;color:#201f1e">4.5%</div>
<div class="t" style="right:33.0px;top:864.5px;font-size:13px;line-height:13px;font-weight:bold;color:#201f1e">$2,664.05bn</div>
<div class="r" style="left:14.0px;top:882.0px;width:1287.0px;height:8.0px;background:#a8a8a8;border-radius:4px"></div>
<div class="r" style="left:1304.5px;top:452.0px;width:6.8px;height:252.0px;background:#a8a8a8;border-radius:3.5px"></div>
<div class="r" style="left:138px;top:106px;width:702px;height:501.5px;background:#7a3d86;border-top:1px solid #2e1536;border-right:1px solid #2e1536;border-bottom:1px solid #55275f;border-left:1px solid #6a3377;box-sizing:border-box"></div>
<div class="r" style="left:138.0px;top:107.0px;width:701.0px;height:139.0px;background:#70347f"></div>
<div class="t" style="left:168.0px;top:114.2px;font-size:13px;line-height:13px;color:#fff;font-weight:bold">Country :&nbsp; Canada</div>
<svg class="r" style="left:148px;top:128.5px" width="11" height="6"><polygon points="5.3,0 10.5,5.5 0,5.5" fill="#fff"/></svg>
<div class="r" style="left:144.0px;top:137.0px;width:87.0px;height:1.0px;background:#c7a9d2"></div>
<div class="r" style="left:230.0px;top:137.0px;width:1.0px;height:76.0px;background:#c7a9d2"></div>
<svg class="r" style="left:148.7px;top:138px" width="76" height="38" viewBox="0 0 1200 600">
<rect width="1200" height="600" fill="#fff"/><rect width="300" height="600" fill="#f00"/><rect x="900" width="300" height="600" fill="#f00"/>
<path fill="#f00" d="M 600,75 L 557,155 C 552,163 544,162 536,158 L 505,142 L 528,264 C 533,286 517,286 509,277 L 455,216 L 446,247 C 445,251 440,256 433,255 L 365,241 L 383,306 C 387,320 390,326 380,330 L 356,341 L 471,435 C 476,439 478,446 476,453 L 466,486 C 506,481 543,474 583,469 C 587,469 593,475 593,479 L 588,600 L 612,600 L 607,479 C 607,475 613,469 617,469 C 657,474 694,481 734,486 L 724,453 C 722,446 724,439 729,435 L 844,341 L 820,330 C 810,326 813,320 817,306 L 835,241 L 767,255 C 760,256 755,251 754,247 L 745,216 L 691,277 C 683,286 667,286 672,264 L 695,142 L 664,158 C 656,162 648,163 643,155 Z"/>
</svg>
<div class="r" style="left:239.0px;top:137.0px;width:600.0px;height:76.6px;background:#e4d9e8"></div>
<svg class="r" style="left:244.0px;top:151px" width="8" height="49"><path d="M7,0 C1.5,6 0,16 0,24.5 C0,33 1.5,43 7,49 Z" fill="#a683c3"/></svg>
<div class="t" style="left:259.7px;top:144.7px;font-size:12.7px;line-height:12.7px;color:#0a0a0a;font-weight:bold">Exports</div>
<div class="t" style="left:259.7px;top:161.7px;font-size:14.5px;line-height:14.5px;color:#1c1c1c;font-weight:bold">$349.91bn</div>
<div class="t" style="left:259.7px;top:185.7px;font-size:10.6px;line-height:10.6px;color:#666;font-weight:bold">LY: $354.41bn</div>
<div class="r" style="left:332.3px;top:183.0px;width:38.5px;height:14.6px;background:#f3b3bb"></div>
<div class="t" style="left:334.1px;top:185.6px;font-size:10.6px;line-height:10.6px;color:#e81123"><span style="display:inline-block;width:0;height:0;border-left:4.5px solid transparent;border-right:4.5px solid transparent;border-top:7.2px solid #e81123;vertical-align:0px;margin-right:1px"></span>-1.3%</div>
<svg class="r" style="left:391.0px;top:151px" width="8" height="49"><path d="M7,0 C1.5,6 0,16 0,24.5 C0,33 1.5,43 7,49 Z" fill="#a683c3"/></svg>
<div class="t" style="left:406.7px;top:144.7px;font-size:12.7px;line-height:12.7px;color:#0a0a0a;font-weight:bold">Imports</div>
<div class="t" style="left:406.7px;top:161.7px;font-size:14.5px;line-height:14.5px;color:#1c1c1c;font-weight:bold">$411.89bn</div>
<div class="t" style="left:406.7px;top:185.7px;font-size:10.6px;line-height:10.6px;color:#666;font-weight:bold">LY: $418.01bn</div>
<div class="r" style="left:479.3px;top:183.0px;width:38.5px;height:14.6px;background:#f3b3bb"></div>
<div class="t" style="left:481.1px;top:185.6px;font-size:10.6px;line-height:10.6px;color:#e81123"><span style="display:inline-block;width:0;height:0;border-left:4.5px solid transparent;border-right:4.5px solid transparent;border-top:7.2px solid #e81123;vertical-align:0px;margin-right:1px"></span>-1.5%</div>
<svg class="r" style="left:538.0px;top:151px" width="8" height="49"><path d="M7,0 C1.5,6 0,16 0,24.5 C0,33 1.5,43 7,49 Z" fill="#a683c3"/></svg>
<div class="t" style="left:553.7px;top:144.7px;font-size:12.7px;line-height:12.7px;color:#0a0a0a;font-weight:bold">Trade Balance</div>
<div class="t" style="left:553.7px;top:161.7px;font-size:14.5px;line-height:14.5px;color:#1c1c1c;font-weight:bold">($61.98bn)</div>
<div class="t" style="left:553.7px;top:185.7px;font-size:10.6px;line-height:10.6px;color:#666;font-weight:bold">LY: ($63.60bn)</div>
<div class="r" style="left:628.7px;top:183.0px;width:38.5px;height:14.6px;background:#b3dbb0"></div>
<div class="t" style="left:630.5px;top:185.6px;font-size:10.6px;line-height:10.6px;color:#2ca01c"><span style="display:inline-block;width:0;height:0;border-left:4.5px solid transparent;border-right:4.5px solid transparent;border-top:7.2px solid #2ca01c;vertical-align:0px;margin-right:1px"></span>-2.6%</div>
<svg class="r" style="left:685.0px;top:151px" width="8" height="49"><path d="M7,0 C1.5,6 0,16 0,24.5 C0,33 1.5,43 7,49 Z" fill="#a683c3"/></svg>
<div class="t" style="left:700.7px;top:144.7px;font-size:12.7px;line-height:12.7px;color:#0a0a0a;font-weight:bold">Trade Volume</div>
<div class="t" style="left:700.7px;top:161.7px;font-size:14.5px;line-height:14.5px;color:#1c1c1c;font-weight:bold">$761.79bn</div>
<div class="t" style="left:700.7px;top:185.7px;font-size:10.6px;line-height:10.6px;color:#666;font-weight:bold">LY: $772.42bn</div>
<div class="r" style="left:773.3px;top:183.0px;width:38.5px;height:14.6px;background:#f3b3bb"></div>
<div class="t" style="left:775.1px;top:185.6px;font-size:10.6px;line-height:10.6px;color:#e81123"><span style="display:inline-block;width:0;height:0;border-left:4.5px solid transparent;border-right:4.5px solid transparent;border-top:7.2px solid #e81123;vertical-align:0px;margin-right:1px"></span>-1.4%</div>
<div class="t" style="left:144.6px;top:225.5px;font-size:19.4px;line-height:19.4px;color:#f6eef8">Top 10 Product Group | By Exports</div>
<div class="t" style="left:152.5px;top:261.1px;font-size:11.45px;line-height:11.45px;color:#f7eaf8">Vehicles Than Railway Or Tramway | $56.6B</div>
<div class="r" style="left:144.0px;top:274.2px;width:629.0px;height:15.8px;background:#a466b2"></div>
<div class="r" style="left:773.0px;top:272.3px;width:60.7px;height:19.0px;background:#5b1f6c;border-radius:4px"></div>
<div class="t" style="left:783.4px;top:276.0px;font-size:11.8px;line-height:11.8px;color:#ff1a1a"><span style="display:inline-block;width:0;height:0;border-left:4.8px solid transparent;border-right:4.8px solid transparent;border-top:8px solid #ff1a1a;vertical-align:0px;margin-right:1px"></span>-3.8%</div>
<div class="t" style="left:152.5px;top:295.7px;font-size:11.45px;line-height:11.45px;color:#f7eaf8">Nuclear Reactors Boilers Machinery Mechanical | $53.2B</div>
<div class="r" style="left:144.0px;top:308.9px;width:614.6px;height:15.8px;background:#a466b2"></div>
<div class="r" style="left:763.0px;top:307.0px;width:65.0px;height:19.0px;background:#5b1f6c;border-radius:4px"></div>
<div class="t" style="left:773.4px;top:310.6px;font-size:11.8px;line-height:11.8px;color:#ff1a1a"><span style="display:inline-block;width:0;height:0;border-left:4.8px solid transparent;border-right:4.8px solid transparent;border-top:8px solid #ff1a1a;vertical-align:0px;margin-right:1px"></span>-0.2%</div>
<div class="t" style="left:152.5px;top:330.4px;font-size:11.45px;line-height:11.45px;color:#f7eaf8">Electrical Machinery Equipment Parts Thereof | $29.6B</div>
<div class="r" style="left:144.0px;top:343.5px;width:341.7px;height:15.8px;background:#a466b2"></div>
<div class="r" style="left:490.0px;top:341.6px;width:65.0px;height:19.0px;background:#5b1f6c;border-radius:4px"></div>
<div class="t" style="left:500.4px;top:345.3px;font-size:11.8px;line-height:11.8px;color:#ff1a1a"><span style="display:inline-block;width:0;height:0;border-left:4.8px solid transparent;border-right:4.8px solid transparent;border-top:8px solid #ff1a1a;vertical-align:0px;margin-right:1px"></span>-0.9%</div>
<div class="t" style="left:152.5px;top:365.1px;font-size:11.45px;line-height:11.45px;color:#f7eaf8">Mineral Fuels Mineral Oils Products | $28.1B</div>
<div class="r" style="left:144.0px;top:378.2px;width:325.0px;height:15.8px;background:#a466b2"></div>
<div class="r" style="left:473.0px;top:376.3px;width:65.6px;height:19.0px;background:#5b1f6c;border-radius:4px"></div>
<div class="t" style="left:483.4px;top:380.0px;font-size:11.8px;line-height:11.8px;color:#ff1a1a"><span style="display:inline-block;width:0;height:0;border-left:4.8px solid transparent;border-right:4.8px solid transparent;border-top:8px solid #ff1a1a;vertical-align:0px;margin-right:1px"></span>-6.3%</div>
<div class="t" style="left:152.5px;top:399.7px;font-size:11.45px;line-height:11.45px;color:#f7eaf8">Plastics Articles Thereof | $15.4B</div>
<div class="r" style="left:144.0px;top:412.9px;width:178.4px;height:15.8px;background:#a466b2"></div>
<div class="r" style="left:326.0px;top:411.0px;width:65.6px;height:19.0px;background:#5b1f6c;border-radius:4px"></div>
<div class="t" style="left:336.4px;top:414.6px;font-size:11.8px;line-height:11.8px;color:#ff1a1a"><span style="display:inline-block;width:0;height:0;border-left:4.8px solid transparent;border-right:4.8px solid transparent;border-top:8px solid #ff1a1a;vertical-align:0px;margin-right:1px"></span>-0.5%</div>
<div class="t" style="left:152.5px;top:434.4px;font-size:11.45px;line-height:11.45px;color:#f7eaf8">Special Classification Provisions | $11.8B</div>
<div class="r" style="left:144.0px;top:447.6px;width:136.4px;height:15.8px;background:#a466b2"></div>
<div class="r" style="left:284.0px;top:445.7px;width:68.5px;height:19.0px;background:#5b1f6c;border-radius:4px"></div>
<div class="t" style="left:294.4px;top:449.3px;font-size:11.8px;line-height:11.8px;color:#33b01c"><span style="display:inline-block;width:0;height:0;border-left:4.8px solid transparent;border-right:4.8px solid transparent;border-bottom:8px solid #33b01c;vertical-align:0px;margin-right:1px"></span>+1.0%</div>
<div class="t" style="left:152.5px;top:469.1px;font-size:11.45px;line-height:11.45px;color:#f7eaf8">Optical Photographic Cinematographic Measuring Checking | $11.2B</div>
<div class="r" style="left:144.0px;top:482.2px;width:129.7px;height:15.8px;background:#a466b2"></div>
<div class="r" style="left:278.0px;top:480.3px;width:68.0px;height:19.0px;background:#5b1f6c;border-radius:4px"></div>
<div class="t" style="left:288.4px;top:484.0px;font-size:11.8px;line-height:11.8px;color:#33b01c"><span style="display:inline-block;width:0;height:0;border-left:4.8px solid transparent;border-right:4.8px solid transparent;border-bottom:8px solid #33b01c;vertical-align:0px;margin-right:1px"></span>+4.4%</div>
<div class="t" style="left:152.5px;top:503.8px;font-size:11.45px;line-height:11.45px;color:#f7eaf8">Aircraft Spacecraft Parts Thereof | $9.0B</div>
<div class="r" style="left:144.0px;top:516.9px;width:104.0px;height:15.8px;background:#a466b2"></div>
<div class="r" style="left:252.0px;top:515.0px;width:65.0px;height:19.0px;background:#5b1f6c;border-radius:4px"></div>
<div class="t" style="left:262.4px;top:518.7px;font-size:11.8px;line-height:11.8px;color:#ff1a1a"><span style="display:inline-block;width:0;height:0;border-left:4.8px solid transparent;border-right:4.8px solid transparent;border-top:8px solid #ff1a1a;vertical-align:0px;margin-right:1px"></span>-2.3%</div>
<div class="t" style="left:152.5px;top:538.4px;font-size:11.45px;line-height:11.45px;color:#f7eaf8">Natural Or Cultured Pearls Precious | $7.8B</div>
<div class="r" style="left:144.0px;top:551.6px;width:90.6px;height:15.8px;background:#a466b2"></div>
<div class="r" style="left:239.0px;top:549.7px;width:64.5px;height:19.0px;background:#5b1f6c;border-radius:4px"></div>
<div class="t" style="left:249.4px;top:553.3px;font-size:11.8px;line-height:11.8px;color:#ff1a1a"><span style="display:inline-block;width:0;height:0;border-left:4.8px solid transparent;border-right:4.8px solid transparent;border-top:8px solid #ff1a1a;vertical-align:0px;margin-right:1px"></span>-8.5%</div>
<div class="t" style="left:152.5px;top:573.1px;font-size:11.45px;line-height:11.45px;color:#f7eaf8">Pharmaceutical Products | $7.0B</div>
<div class="r" style="left:144.0px;top:586.2px;width:80.7px;height:15.8px;background:#a466b2"></div>
<div class="r" style="left:229.0px;top:584.3px;width:74.5px;height:19.0px;background:#5b1f6c;border-radius:4px"></div>
<div class="t" style="left:239.4px;top:588.0px;font-size:11.8px;line-height:11.8px;color:#33b01c"><span style="display:inline-block;width:0;height:0;border-left:4.8px solid transparent;border-right:4.8px solid transparent;border-bottom:8px solid #33b01c;vertical-align:0px;margin-right:1px"></span>+18.5%</div>
<svg class="r" style="left:839px;top:113px" width="10" height="13"><polygon points="0,0 8,6.5 0,13" fill="#fff"/></svg>
</body></html>
